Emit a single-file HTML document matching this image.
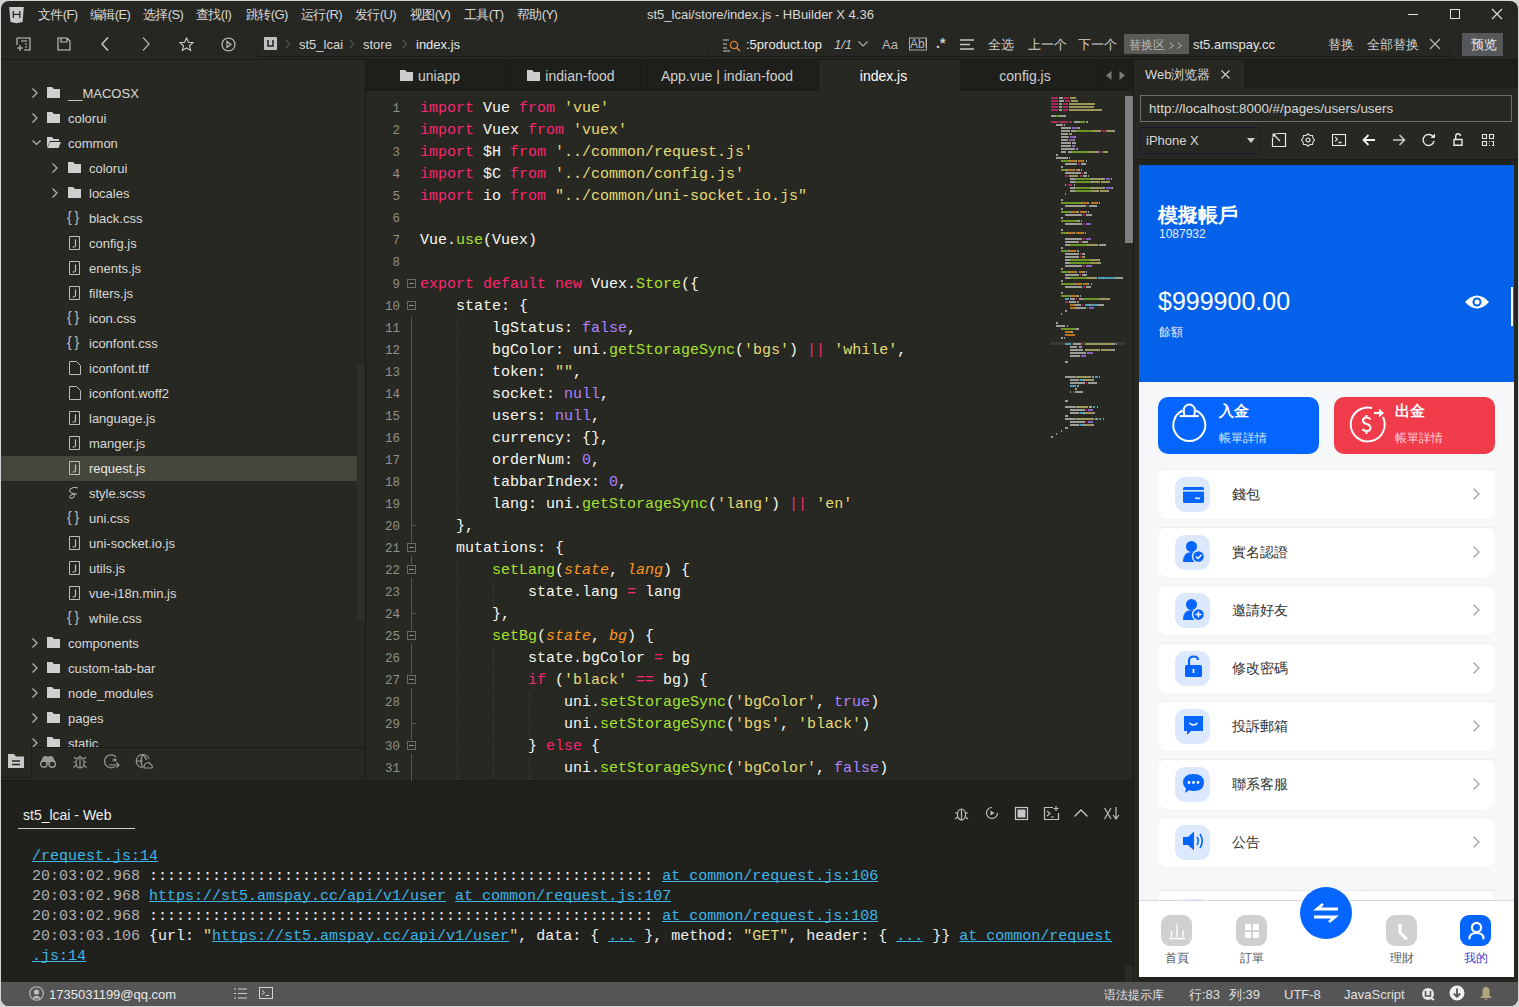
<!DOCTYPE html><html><head><meta charset="utf-8"><style>*{box-sizing:border-box;margin:0;padding:0}
html,body{width:1519px;height:1007px;overflow:hidden;background:#d4d4d4}
body{position:relative;font-family:"Liberation Sans",sans-serif;font-size:13px;color:#d6d6d6}
.ab{position:absolute}
.win{position:absolute;left:1px;top:1px;width:1517px;height:1005px;background:#262722;border-radius:8px 8px 8px 8px;overflow:hidden}
.t{position:absolute;white-space:pre;line-height:1}
.code{position:absolute;left:420px;white-space:pre;font-family:"Liberation Mono",monospace;font-size:15px;line-height:22px;color:#f8f8f2}
.ln{position:absolute;width:40px;left:360px;text-align:right;font-family:"Liberation Mono",monospace;font-size:12.5px;line-height:22px;color:#90908a}
.k{color:#f92672}.f{color:#a6e22e}.s{color:#e6db74}.n{color:#ae81ff}.p{color:#fd971f;font-style:italic}
svg{position:absolute;overflow:visible}
</style></head><body><div class="win"></div><svg style="left:0px;top:0px;" width="30" height="30" viewBox="0 0 30 30"><path d="M9.2 7 H23.8 L22.6 22 L16.5 23.2 L10.5 22 Z" fill="#cbcbcb"/><path d="M13.3 11 V18 M19.8 11 V18 M13.3 14.4 H19.8" stroke="#262722" stroke-width="1.3" fill="none"/></svg><div class="t" style="left:38px;top:8px;font-size:13px;color:#d8d8d8;letter-spacing:-0.6px">文件(F)</div><div class="t" style="left:90px;top:8px;font-size:13px;color:#d8d8d8;letter-spacing:-0.6px">编辑(E)</div><div class="t" style="left:143px;top:8px;font-size:13px;color:#d8d8d8;letter-spacing:-0.6px">选择(S)</div><div class="t" style="left:196px;top:8px;font-size:13px;color:#d8d8d8;letter-spacing:-0.6px">查找(I)</div><div class="t" style="left:246px;top:8px;font-size:13px;color:#d8d8d8;letter-spacing:-0.6px">跳转(G)</div><div class="t" style="left:301px;top:8px;font-size:13px;color:#d8d8d8;letter-spacing:-0.6px">运行(R)</div><div class="t" style="left:355px;top:8px;font-size:13px;color:#d8d8d8;letter-spacing:-0.6px">发行(U)</div><div class="t" style="left:410px;top:8px;font-size:13px;color:#d8d8d8;letter-spacing:-0.6px">视图(V)</div><div class="t" style="left:464px;top:8px;font-size:13px;color:#d8d8d8;letter-spacing:-0.6px">工具(T)</div><div class="t" style="left:517px;top:8px;font-size:13px;color:#d8d8d8;letter-spacing:-0.6px">帮助(Y)</div><div class="t title" style="left:647px;top:8px;font-size:13px;color:#d8d8d8;">st5_lcai/store/index.js - HBuilder X 4.36</div><svg style="left:1408px;top:14px;" width="10" height="1" viewBox="0 0 10 1"><rect x="0" y="0" width="10" height="1" fill="#e0e0e0"/></svg><svg style="left:1450px;top:9px;" width="10" height="10" viewBox="0 0 10 10"><rect x="0.5" y="0.5" width="9" height="9" fill="none" stroke="#e0e0e0" stroke-width="1"/></svg><svg style="left:1492px;top:9px;" width="10" height="10" viewBox="0 0 10 10"><path d="M0 0 L10 10 M10 0 L0 10" stroke="#e0e0e0" stroke-width="1.1"/></svg><svg style="left:16px;top:37px;" width="15" height="14" viewBox="0 0 15 14"><path d="M1 1 H14 V13 H8 M1 1 V8" fill="none" stroke="#c8c8c8" stroke-width="1.1"/><path d="M5 4 H11 M9 7 H11 M9 10 H11 M1 11 H7 M4 8 V14" fill="none" stroke="#c8c8c8" stroke-width="1.1"/></svg><svg style="left:57px;top:37px;" width="14" height="14" viewBox="0 0 14 14"><path d="M1 1 H10 L13 4 V13 H1 Z M4 1 V5 H10 V1" fill="none" stroke="#c8c8c8" stroke-width="1.1"/></svg><svg style="left:101px;top:37px;" width="8" height="14" viewBox="0 0 8 14"><path d="M7 0.5 L1 7 L7 13.5" fill="none" stroke="#cfcfcf" stroke-width="1.4"/></svg><svg style="left:142px;top:37px;" width="8" height="14" viewBox="0 0 8 14"><path d="M1 0.5 L7 7 L1 13.5" fill="none" stroke="#a8a8a8" stroke-width="1.4"/></svg><svg style="left:179px;top:37px;" width="15" height="15" viewBox="0 0 15 15"><path d="M7.5 1 L9.4 5.3 L14 5.7 L10.5 8.8 L11.6 13.4 L7.5 11 L3.4 13.4 L4.5 8.8 L1 5.7 L5.6 5.3 Z" fill="none" stroke="#c8c8c8" stroke-width="1.1"/></svg><svg style="left:221px;top:37px;" width="15" height="15" viewBox="0 0 15 15"><circle cx="7.5" cy="7.5" r="6.5" fill="none" stroke="#c8c8c8" stroke-width="1.1"/><path d="M6 4.5 L10 7.5 L6 10.5 Z" fill="none" stroke="#c8c8c8" stroke-width="1.1"/></svg><div class="ab" style="left:257px;top:56px;width:450px;height:1px;background:#1a1b18;"></div><div class="ab" style="left:257px;top:49px;width:1px;height:8px;background:#1a1b18;"></div><div class="ab" style="left:264px;top:37px;width:13px;height:13px;background:#c0c0c0;border-radius:1px"></div><svg style="left:266px;top:39px;" width="9" height="9" viewBox="0 0 9 9"><path d="M2 1 V7 H7 V1" fill="none" stroke="#262722" stroke-width="1.6"/></svg><svg style="left:285px;top:39px;" width="5" height="10" viewBox="0 0 5 10"><path d="M0.5 0.5 L4.5 5 L0.5 9.5" fill="none" stroke="#6a6a66" stroke-width="1"/></svg><svg style="left:349px;top:39px;" width="5" height="10" viewBox="0 0 5 10"><path d="M0.5 0.5 L4.5 5 L0.5 9.5" fill="none" stroke="#6a6a66" stroke-width="1"/></svg><svg style="left:402px;top:39px;" width="5" height="10" viewBox="0 0 5 10"><path d="M0.5 0.5 L4.5 5 L0.5 9.5" fill="none" stroke="#6a6a66" stroke-width="1"/></svg><div class="t" style="left:299px;top:38px;font-size:13px;color:#d8d8d8;">st5_lcai</div><div class="t" style="left:363px;top:38px;font-size:13px;color:#d8d8d8;">store</div><div class="t" style="left:416px;top:38px;font-size:13px;color:#e8e8e8;">index.js</div><div class="ab" style="left:708px;top:49px;width:1px;height:8px;background:#1a1b18;"></div><div class="ab" style="left:708px;top:56px;width:741px;height:1px;background:#1a1b18;"></div><div class="ab" style="left:1449px;top:49px;width:1px;height:8px;background:#1a1b18;"></div><svg style="left:723px;top:38px;" width="18" height="14" viewBox="0 0 18 14"><path d="M0 2 H6 M0 6 H4 M0 10 H4 M0 13 H7" stroke="#c8c8c8" stroke-width="1.1"/><circle cx="11" cy="7" r="3.6" fill="none" stroke="#e0803a" stroke-width="1.3"/><path d="M13.5 9.5 L17 13" stroke="#e0803a" stroke-width="1.5"/></svg><div class="t" style="left:746px;top:38px;font-size:13px;color:#e8e8e8;">:5product.top</div><div class="t" style="left:834px;top:38px;font-size:13px;color:#c8c8c8;font-style:italic">1/1</div><svg style="left:858px;top:41px;" width="10" height="6" viewBox="0 0 10 6"><path d="M0.5 0.5 L5 5 L9.5 0.5" fill="none" stroke="#b0b0b0" stroke-width="1.1"/></svg><div class="t" style="left:882px;top:38px;font-size:13px;color:#b8b8b8;">Aa</div><svg style="left:909px;top:37px;" width="18" height="14" viewBox="0 0 18 14"><rect x="0.5" y="1" width="17" height="12" fill="none" stroke="#a8a8a8" stroke-width="1"/></svg><div class="t" style="left:910px;top:38px;font-size:12px;color:#b8b8b8;">Abl</div><div class="t" style="left:936px;top:36px;font-size:14px;color:#d0d0d0;font-weight:bold">.*</div><svg style="left:960px;top:39px;" width="14" height="11" viewBox="0 0 14 11"><path d="M0 1 H14 M0 5.5 H10 M0 10 H14" stroke="#c8c8c8" stroke-width="1.4"/></svg><div class="t" style="left:988px;top:38px;font-size:13px;color:#d0d0d0;">全选</div><div class="t" style="left:1028px;top:38px;font-size:13px;color:#d0d0d0;">上一个</div><div class="t" style="left:1078px;top:38px;font-size:13px;color:#d0d0d0;">下一个</div><div class="ab" style="left:1124px;top:34px;width:65px;height:20px;background:#5a5b57;"></div><div class="t" style="left:1129px;top:39px;font-size:12px;color:#b8b8b8;">替换区</div><svg style="left:1169px;top:42px;" width="5" height="7" viewBox="0 0 5 7"><path d="M0.5 0.5 L4.5 3.5 L0.5 6.5" fill="none" stroke="#b8b8b8" stroke-width="1"/></svg><svg style="left:1177px;top:42px;" width="5" height="7" viewBox="0 0 5 7"><path d="M0.5 0.5 L4.5 3.5 L0.5 6.5" fill="none" stroke="#b8b8b8" stroke-width="1"/></svg><div class="t" style="left:1193px;top:38px;font-size:13px;color:#e0e0e0;">st5.amspay.cc</div><div class="t" style="left:1328px;top:38px;font-size:13px;color:#d0d0d0;">替换</div><div class="t" style="left:1367px;top:38px;font-size:13px;color:#d0d0d0;">全部替换</div><svg style="left:1429px;top:38px;" width="12" height="12" viewBox="0 0 12 12"><path d="M1 1 L11 11 M11 1 L1 11" stroke="#b8b8b8" stroke-width="1.2"/></svg><div class="ab" style="left:1462px;top:33px;width:41px;height:23px;background:#56575a;"></div><div class="t" style="left:1471px;top:38px;font-size:13px;color:#e8e8e8;">预览</div><div class="ab" style="left:1px;top:59px;width:1517px;height:1px;background:#1a1b18;"></div><div class="ab" style="left:1px;top:60px;width:364px;height:688px;background:#272822;"></div><div class="ab" style="left:365px;top:60px;width:1px;height:721px;background:#1a1b17;"></div><div class="ab" style="left:357px;top:365px;width:8px;height:255px;background:#2e2f2a;"></div><svg style="left:32px;top:88px;" width="6" height="10" viewBox="0 0 6 10"><path d="M0.5 0.5 L5 5 L0.5 9.5" fill="none" stroke="#b8b8b8" stroke-width="1.2"/></svg><svg style="left:47px;top:87px;" width="13" height="12" viewBox="0 0 13 12"><path d="M0 0 H5 L7 2 H13 V11 H0 Z" fill="#cfcfcf"/></svg><div class="t" style="left:68px;top:87px;font-size:13px;color:#d8d8d8;">__MACOSX</div><svg style="left:32px;top:113px;" width="6" height="10" viewBox="0 0 6 10"><path d="M0.5 0.5 L5 5 L0.5 9.5" fill="none" stroke="#b8b8b8" stroke-width="1.2"/></svg><svg style="left:47px;top:112px;" width="13" height="12" viewBox="0 0 13 12"><path d="M0 0 H5 L7 2 H13 V11 H0 Z" fill="#cfcfcf"/></svg><div class="t" style="left:68px;top:112px;font-size:13px;color:#d8d8d8;">colorui</div><svg style="left:32px;top:140px;" width="9" height="6" viewBox="0 0 9 6"><path d="M0.5 0.5 L4.5 4.5 L8.5 0.5" fill="none" stroke="#b8b8b8" stroke-width="1.2"/></svg><svg style="left:47px;top:137px;" width="14" height="12" viewBox="0 0 14 12"><path d="M0 0 H5 L6.5 2 H12 V4 H3 L0 11 Z" fill="#cfcfcf"/><path d="M3 5 H14 L11.5 11 H0.5 Z" fill="#cfcfcf"/></svg><div class="t" style="left:68px;top:137px;font-size:13px;color:#d8d8d8;">common</div><svg style="left:52px;top:163px;" width="6" height="10" viewBox="0 0 6 10"><path d="M0.5 0.5 L5 5 L0.5 9.5" fill="none" stroke="#b8b8b8" stroke-width="1.2"/></svg><svg style="left:68px;top:162px;" width="13" height="12" viewBox="0 0 13 12"><path d="M0 0 H5 L7 2 H13 V11 H0 Z" fill="#cfcfcf"/></svg><div class="t" style="left:89px;top:162px;font-size:13px;color:#d8d8d8;">colorui</div><svg style="left:52px;top:188px;" width="6" height="10" viewBox="0 0 6 10"><path d="M0.5 0.5 L5 5 L0.5 9.5" fill="none" stroke="#b8b8b8" stroke-width="1.2"/></svg><svg style="left:68px;top:187px;" width="13" height="12" viewBox="0 0 13 12"><path d="M0 0 H5 L7 2 H13 V11 H0 Z" fill="#cfcfcf"/></svg><div class="t" style="left:89px;top:187px;font-size:13px;color:#d8d8d8;">locales</div><div class="t" style="left:67px;top:210px;font-size:14px;color:#bdbdbd;">{&thinsp;}</div><div class="t" style="left:89px;top:212px;font-size:13px;color:#d8d8d8;">black.css</div><svg style="left:69px;top:236px;" width="11" height="14" viewBox="0 0 11 14"><path d="M0.5 0.5 H10.5 V13.5 H0.5 Z" fill="none" stroke="#bdbdbd" stroke-width="1"/><path d="M6.5 3.5 V9.5 Q6.5 11 5 11 H3.5" fill="none" stroke="#bdbdbd" stroke-width="1.2"/></svg><div class="t" style="left:89px;top:237px;font-size:13px;color:#d8d8d8;">config.js</div><svg style="left:69px;top:261px;" width="11" height="14" viewBox="0 0 11 14"><path d="M0.5 0.5 H10.5 V13.5 H0.5 Z" fill="none" stroke="#bdbdbd" stroke-width="1"/><path d="M6.5 3.5 V9.5 Q6.5 11 5 11 H3.5" fill="none" stroke="#bdbdbd" stroke-width="1.2"/></svg><div class="t" style="left:89px;top:262px;font-size:13px;color:#d8d8d8;">enents.js</div><svg style="left:69px;top:286px;" width="11" height="14" viewBox="0 0 11 14"><path d="M0.5 0.5 H10.5 V13.5 H0.5 Z" fill="none" stroke="#bdbdbd" stroke-width="1"/><path d="M6.5 3.5 V9.5 Q6.5 11 5 11 H3.5" fill="none" stroke="#bdbdbd" stroke-width="1.2"/></svg><div class="t" style="left:89px;top:287px;font-size:13px;color:#d8d8d8;">filters.js</div><div class="t" style="left:67px;top:310px;font-size:14px;color:#bdbdbd;">{&thinsp;}</div><div class="t" style="left:89px;top:312px;font-size:13px;color:#d8d8d8;">icon.css</div><div class="t" style="left:67px;top:335px;font-size:14px;color:#bdbdbd;">{&thinsp;}</div><div class="t" style="left:89px;top:337px;font-size:13px;color:#d8d8d8;">iconfont.css</div><svg style="left:69px;top:361px;" width="12" height="14" viewBox="0 0 12 14"><path d="M0.5 0.5 H7.5 L11.5 4.5 V13.5 H0.5 Z" fill="none" stroke="#bdbdbd" stroke-width="1"/></svg><div class="t" style="left:89px;top:362px;font-size:13px;color:#d8d8d8;">iconfont.ttf</div><svg style="left:69px;top:386px;" width="12" height="14" viewBox="0 0 12 14"><path d="M0.5 0.5 H7.5 L11.5 4.5 V13.5 H0.5 Z" fill="none" stroke="#bdbdbd" stroke-width="1"/></svg><div class="t" style="left:89px;top:387px;font-size:13px;color:#d8d8d8;">iconfont.woff2</div><svg style="left:69px;top:411px;" width="11" height="14" viewBox="0 0 11 14"><path d="M0.5 0.5 H10.5 V13.5 H0.5 Z" fill="none" stroke="#bdbdbd" stroke-width="1"/><path d="M6.5 3.5 V9.5 Q6.5 11 5 11 H3.5" fill="none" stroke="#bdbdbd" stroke-width="1.2"/></svg><div class="t" style="left:89px;top:412px;font-size:13px;color:#d8d8d8;">language.js</div><svg style="left:69px;top:436px;" width="11" height="14" viewBox="0 0 11 14"><path d="M0.5 0.5 H10.5 V13.5 H0.5 Z" fill="none" stroke="#bdbdbd" stroke-width="1"/><path d="M6.5 3.5 V9.5 Q6.5 11 5 11 H3.5" fill="none" stroke="#bdbdbd" stroke-width="1.2"/></svg><div class="t" style="left:89px;top:437px;font-size:13px;color:#d8d8d8;">manger.js</div><div class="ab" style="left:1px;top:456px;width:356px;height:25px;background:#44453b;"></div><svg style="left:69px;top:461px;" width="11" height="14" viewBox="0 0 11 14"><path d="M0.5 0.5 H10.5 V13.5 H0.5 Z" fill="none" stroke="#bdbdbd" stroke-width="1"/><path d="M6.5 3.5 V9.5 Q6.5 11 5 11 H3.5" fill="none" stroke="#bdbdbd" stroke-width="1.2"/></svg><div class="t" style="left:89px;top:462px;font-size:13px;color:#e8e8e8;">request.js</div><svg style="left:68px;top:486px;" width="13" height="14" viewBox="0 0 13 14"><path d="M10 2 Q6 0 2 3 Q0 6 4 7 Q8 8 6 11 Q4 13 2 12 Q1 11 3 9 Q6 7 9 8" fill="none" stroke="#bdbdbd" stroke-width="1"/></svg><div class="t" style="left:89px;top:487px;font-size:13px;color:#d8d8d8;">style.scss</div><div class="t" style="left:67px;top:510px;font-size:14px;color:#bdbdbd;">{&thinsp;}</div><div class="t" style="left:89px;top:512px;font-size:13px;color:#d8d8d8;">uni.css</div><svg style="left:69px;top:536px;" width="11" height="14" viewBox="0 0 11 14"><path d="M0.5 0.5 H10.5 V13.5 H0.5 Z" fill="none" stroke="#bdbdbd" stroke-width="1"/><path d="M6.5 3.5 V9.5 Q6.5 11 5 11 H3.5" fill="none" stroke="#bdbdbd" stroke-width="1.2"/></svg><div class="t" style="left:89px;top:537px;font-size:13px;color:#d8d8d8;">uni-socket.io.js</div><svg style="left:69px;top:561px;" width="11" height="14" viewBox="0 0 11 14"><path d="M0.5 0.5 H10.5 V13.5 H0.5 Z" fill="none" stroke="#bdbdbd" stroke-width="1"/><path d="M6.5 3.5 V9.5 Q6.5 11 5 11 H3.5" fill="none" stroke="#bdbdbd" stroke-width="1.2"/></svg><div class="t" style="left:89px;top:562px;font-size:13px;color:#d8d8d8;">utils.js</div><svg style="left:69px;top:586px;" width="11" height="14" viewBox="0 0 11 14"><path d="M0.5 0.5 H10.5 V13.5 H0.5 Z" fill="none" stroke="#bdbdbd" stroke-width="1"/><path d="M6.5 3.5 V9.5 Q6.5 11 5 11 H3.5" fill="none" stroke="#bdbdbd" stroke-width="1.2"/></svg><div class="t" style="left:89px;top:587px;font-size:13px;color:#d8d8d8;">vue-i18n.min.js</div><div class="t" style="left:67px;top:610px;font-size:14px;color:#bdbdbd;">{&thinsp;}</div><div class="t" style="left:89px;top:612px;font-size:13px;color:#d8d8d8;">while.css</div><svg style="left:32px;top:638px;" width="6" height="10" viewBox="0 0 6 10"><path d="M0.5 0.5 L5 5 L0.5 9.5" fill="none" stroke="#b8b8b8" stroke-width="1.2"/></svg><svg style="left:47px;top:637px;" width="13" height="12" viewBox="0 0 13 12"><path d="M0 0 H5 L7 2 H13 V11 H0 Z" fill="#cfcfcf"/></svg><div class="t" style="left:68px;top:637px;font-size:13px;color:#d8d8d8;">components</div><svg style="left:32px;top:663px;" width="6" height="10" viewBox="0 0 6 10"><path d="M0.5 0.5 L5 5 L0.5 9.5" fill="none" stroke="#b8b8b8" stroke-width="1.2"/></svg><svg style="left:47px;top:662px;" width="13" height="12" viewBox="0 0 13 12"><path d="M0 0 H5 L7 2 H13 V11 H0 Z" fill="#cfcfcf"/></svg><div class="t" style="left:68px;top:662px;font-size:13px;color:#d8d8d8;">custom-tab-bar</div><svg style="left:32px;top:688px;" width="6" height="10" viewBox="0 0 6 10"><path d="M0.5 0.5 L5 5 L0.5 9.5" fill="none" stroke="#b8b8b8" stroke-width="1.2"/></svg><svg style="left:47px;top:687px;" width="13" height="12" viewBox="0 0 13 12"><path d="M0 0 H5 L7 2 H13 V11 H0 Z" fill="#cfcfcf"/></svg><div class="t" style="left:68px;top:687px;font-size:13px;color:#d8d8d8;">node_modules</div><svg style="left:32px;top:713px;" width="6" height="10" viewBox="0 0 6 10"><path d="M0.5 0.5 L5 5 L0.5 9.5" fill="none" stroke="#b8b8b8" stroke-width="1.2"/></svg><svg style="left:47px;top:712px;" width="13" height="12" viewBox="0 0 13 12"><path d="M0 0 H5 L7 2 H13 V11 H0 Z" fill="#cfcfcf"/></svg><div class="t" style="left:68px;top:712px;font-size:13px;color:#d8d8d8;">pages</div><svg style="left:32px;top:738px;" width="6" height="10" viewBox="0 0 6 10"><path d="M0.5 0.5 L5 5 L0.5 9.5" fill="none" stroke="#b8b8b8" stroke-width="1.2"/></svg><svg style="left:47px;top:737px;" width="13" height="12" viewBox="0 0 13 12"><path d="M0 0 H5 L7 2 H13 V11 H0 Z" fill="#cfcfcf"/></svg><div class="t" style="left:68px;top:737px;font-size:13px;color:#d8d8d8;">static</div><div class="ab" style="left:1px;top:748px;width:364px;height:33px;background:#272822;"></div><div class="ab" style="left:31px;top:747px;width:334px;height:1px;background:#1b1c18;"></div><div class="ab" style="left:1px;top:746px;width:31px;height:32px;background:#272822;border-right:1px solid #1b1c18;border-bottom:1px solid #1b1c18;border-radius:0 0 5px 0"></div><svg style="left:8px;top:754px;" width="16" height="14" viewBox="0 0 16 14"><path d="M0 0 H6 L8 2.5 H16 V14 H0 Z" fill="#c8c8c8"/><path d="M4 7 H12 M4 10.5 H12" stroke="#272822" stroke-width="1.6"/></svg><svg style="left:40px;top:755px;" width="16" height="13" viewBox="0 0 16 13"><circle cx="3.8" cy="9" r="3.2" fill="none" stroke="#9a9a96" stroke-width="1.4"/><circle cx="12.2" cy="9" r="3.2" fill="none" stroke="#9a9a96" stroke-width="1.4"/><path d="M1 7 L3 2 Q4 0.5 6.5 1 L8 2 L9.5 1 Q12 0.5 13 2 L15 7 Z" fill="#9a9a96"/><path d="M6.5 8.5 H9.5" stroke="#9a9a96" stroke-width="1.4"/></svg><svg style="left:73px;top:754px;" width="14" height="15" viewBox="0 0 14 15"><ellipse cx="7" cy="9" rx="4" ry="5" fill="none" stroke="#9a9a96" stroke-width="1.2"/><path d="M4.5 4.5 Q7 0.5 9.5 4.5" fill="none" stroke="#9a9a96" stroke-width="1.2"/><path d="M7 5 V14 M3 8 H0.5 M11 8 H13.5 M3 11.5 L0.5 13.5 M11 11.5 L13.5 13.5 M3.5 5 L1 3 M10.5 5 L13 3" fill="none" stroke="#9a9a96" stroke-width="1.2"/></svg><svg style="left:104px;top:754px;" width="16" height="15" viewBox="0 0 16 15"><path d="M12 3 A6.5 6.5 0 1 0 11 12.5" fill="none" stroke="#9a9a96" stroke-width="1.2"/><path d="M5 11 H15 M12.5 8.5 L15 11 L12.5 13.5 M8 6 H12 M10.5 4.5 L12 6 L10.5 7.5" fill="none" stroke="#9a9a96" stroke-width="1.2"/></svg><svg style="left:136px;top:754px;" width="17" height="15" viewBox="0 0 17 15"><path d="M13 5 A6.5 6.5 0 1 0 6 13.5" fill="none" stroke="#9a9a96" stroke-width="1.2"/><path d="M0.5 7 H7 M7 0.5 Q3 7 7 13.5 M6.5 0.5 Q10 3 10.5 6" fill="none" stroke="#9a9a96" stroke-width="1.2"/><path d="M8 14 H16 Q17 11 14.5 10.5 Q13.5 7.5 11 9 Q8 9 8 14 Z" fill="none" stroke="#9a9a96" stroke-width="1.2"/></svg><div class="ab" style="left:1px;top:780px;width:1132px;height:1px;background:#1a1b17;"></div><div class="ab" style="left:366px;top:60px;width:767px;height:30px;background:#1e1f1b;"></div><div class="ab" style="left:506px;top:60px;width:1px;height:30px;background:#191a16;"></div><div class="ab" style="left:366px;top:61px;width:140px;height:30px;display:flex;align-items:center;justify-content:center;padding-right:12px;font-size:14px;color:#cfcfcf;white-space:pre"><svg style="position:relative;display:inline-block;vertical-align:-1px;margin-right:5px" width="13" height="12" viewBox="0 0 13 12"><path d="M0 0 H5 L7 2 H13 V11 H0 Z" fill="#cdcdcd"/></svg>uniapp</div><div class="ab" style="left:647px;top:60px;width:1px;height:30px;background:#191a16;"></div><div class="ab" style="left:507px;top:61px;width:140px;height:30px;display:flex;align-items:center;justify-content:center;padding-right:12px;font-size:14px;color:#cfcfcf;white-space:pre"><svg style="position:relative;display:inline-block;vertical-align:-1px;margin-right:5px" width="13" height="12" viewBox="0 0 13 12"><path d="M0 0 H5 L7 2 H13 V11 H0 Z" fill="#cdcdcd"/></svg>indian-food</div><div class="ab" style="left:818px;top:60px;width:1px;height:30px;background:#191a16;"></div><div class="ab" style="left:648px;top:61px;width:170px;height:30px;display:flex;align-items:center;justify-content:center;padding-right:12px;font-size:14px;color:#cfcfcf;white-space:pre">App.vue | indian-food</div><div class="ab" style="left:819px;top:60px;width:141px;height:31px;background:#272822;"></div><div class="ab" style="left:819px;top:61px;width:141px;height:30px;display:flex;align-items:center;justify-content:center;padding-right:12px;font-size:14px;color:#ffffff;white-space:pre">index.js</div><div class="ab" style="left:1101px;top:60px;width:1px;height:30px;background:#191a16;"></div><div class="ab" style="left:961px;top:61px;width:140px;height:30px;display:flex;align-items:center;justify-content:center;padding-right:12px;font-size:14px;color:#cfcfcf;white-space:pre">config.js</div><svg style="left:1106px;top:71px;" width="6" height="9" viewBox="0 0 6 9"><path d="M5.5 0 V9 L0 4.5 Z" fill="#7a7a76"/></svg><svg style="left:1119px;top:71px;" width="6" height="9" viewBox="0 0 6 9"><path d="M0.5 0 V9 L6 4.5 Z" fill="#7a7a76"/></svg><div class="ab" style="left:366px;top:90px;width:767px;height:1px;background:#1b1c18;"></div><div class="ab" style="left:819px;top:90px;width:141px;height:1px;background:#272822;"></div><div class="ab" style="left:366px;top:91px;width:767px;height:689px;background:#272822;"></div><div class="ab" style="left:457px;top:318px;width:1px;height:198px;background:repeating-linear-gradient(#4a4b45 0 1px,transparent 1px 3px)"></div><div class="ab" style="left:457px;top:560px;width:1px;height:220px;background:repeating-linear-gradient(#4a4b45 0 1px,transparent 1px 3px)"></div><div class="ab" style="left:493px;top:582px;width:1px;height:22px;background:repeating-linear-gradient(#4a4b45 0 1px,transparent 1px 3px)"></div><div class="ab" style="left:493px;top:648px;width:1px;height:132px;background:repeating-linear-gradient(#4a4b45 0 1px,transparent 1px 3px)"></div><div class="ab" style="left:529px;top:692px;width:1px;height:44px;background:repeating-linear-gradient(#4a4b45 0 1px,transparent 1px 3px)"></div><div class="ab" style="left:529px;top:758px;width:1px;height:22px;background:repeating-linear-gradient(#4a4b45 0 1px,transparent 1px 3px)"></div><div class="ab" style="left:411px;top:317px;width:1px;height:464px;background:#55564f;"></div><div class="ab" style="left:412px;top:525px;width:4px;height:1px;background:#55564f;"></div><div class="ab" style="left:412px;top:613px;width:4px;height:1px;background:#55564f;"></div><div class="ab" style="left:412px;top:723px;width:4px;height:1px;background:#55564f;"></div><svg style="left:407px;top:279px;" width="9" height="9" viewBox="0 0 9 9"><rect x="0.5" y="0.5" width="8" height="8" fill="#272822" stroke="#6a6b64" stroke-width="1"/><path d="M2 4.5 H7" stroke="#8a8b84" stroke-width="1"/></svg><svg style="left:407px;top:301px;" width="9" height="9" viewBox="0 0 9 9"><rect x="0.5" y="0.5" width="8" height="8" fill="#272822" stroke="#6a6b64" stroke-width="1"/><path d="M2 4.5 H7" stroke="#8a8b84" stroke-width="1"/></svg><div class="ab" style="left:411px;top:542px;width:1px;height:14px;background:#272822;"></div><svg style="left:407px;top:543px;" width="9" height="9" viewBox="0 0 9 9"><rect x="0.5" y="0.5" width="8" height="8" fill="#272822" stroke="#6a6b64" stroke-width="1"/><path d="M2 4.5 H7" stroke="#8a8b84" stroke-width="1"/></svg><div class="ab" style="left:411px;top:564px;width:1px;height:14px;background:#272822;"></div><svg style="left:407px;top:565px;" width="9" height="9" viewBox="0 0 9 9"><rect x="0.5" y="0.5" width="8" height="8" fill="#272822" stroke="#6a6b64" stroke-width="1"/><path d="M2 4.5 H7" stroke="#8a8b84" stroke-width="1"/></svg><div class="ab" style="left:411px;top:630px;width:1px;height:14px;background:#272822;"></div><svg style="left:407px;top:631px;" width="9" height="9" viewBox="0 0 9 9"><rect x="0.5" y="0.5" width="8" height="8" fill="#272822" stroke="#6a6b64" stroke-width="1"/><path d="M2 4.5 H7" stroke="#8a8b84" stroke-width="1"/></svg><div class="ab" style="left:411px;top:674px;width:1px;height:14px;background:#272822;"></div><svg style="left:407px;top:675px;" width="9" height="9" viewBox="0 0 9 9"><rect x="0.5" y="0.5" width="8" height="8" fill="#272822" stroke="#6a6b64" stroke-width="1"/><path d="M2 4.5 H7" stroke="#8a8b84" stroke-width="1"/></svg><div class="ab" style="left:411px;top:740px;width:1px;height:14px;background:#272822;"></div><svg style="left:407px;top:741px;" width="9" height="9" viewBox="0 0 9 9"><rect x="0.5" y="0.5" width="8" height="8" fill="#272822" stroke="#6a6b64" stroke-width="1"/><path d="M2 4.5 H7" stroke="#8a8b84" stroke-width="1"/></svg><div class="ln" style="top:98px">1</div><div class="code" style="top:98px"><span class="k">import</span> Vue <span class="k">from</span> <span class="s">'vue'</span></div><div class="ln" style="top:120px">2</div><div class="code" style="top:120px"><span class="k">import</span> Vuex <span class="k">from</span> <span class="s">'vuex'</span></div><div class="ln" style="top:142px">3</div><div class="code" style="top:142px"><span class="k">import</span> $H <span class="k">from</span> <span class="s">'../common/request.js'</span></div><div class="ln" style="top:164px">4</div><div class="code" style="top:164px"><span class="k">import</span> $C <span class="k">from</span> <span class="s">'../common/config.js'</span></div><div class="ln" style="top:186px">5</div><div class="code" style="top:186px"><span class="k">import</span> io <span class="k">from</span> <span class="s">"../common/uni-socket.io.js"</span></div><div class="ln" style="top:208px">6</div><div class="code" style="top:208px"></div><div class="ln" style="top:230px">7</div><div class="code" style="top:230px">Vue.<span class="f">use</span>(Vuex)</div><div class="ln" style="top:252px">8</div><div class="code" style="top:252px"></div><div class="ln" style="top:274px">9</div><div class="code" style="top:274px"><span class="k">export</span> <span class="k">default</span> <span class="k">new</span> Vuex.<span class="f">Store</span>({</div><div class="ln" style="top:296px">10</div><div class="code" style="top:296px">    state: {</div><div class="ln" style="top:318px">11</div><div class="code" style="top:318px">        lgStatus: <span class="n">false</span>,</div><div class="ln" style="top:340px">12</div><div class="code" style="top:340px">        bgColor: uni.<span class="f">getStorageSync</span>(<span class="s">'bgs'</span>) <span class="k">||</span> <span class="s">'while'</span>,</div><div class="ln" style="top:362px">13</div><div class="code" style="top:362px">        token: <span class="s">""</span>,</div><div class="ln" style="top:384px">14</div><div class="code" style="top:384px">        socket: <span class="n">null</span>,</div><div class="ln" style="top:406px">15</div><div class="code" style="top:406px">        users: <span class="n">null</span>,</div><div class="ln" style="top:428px">16</div><div class="code" style="top:428px">        currency: {},</div><div class="ln" style="top:450px">17</div><div class="code" style="top:450px">        orderNum: <span class="n">0</span>,</div><div class="ln" style="top:472px">18</div><div class="code" style="top:472px">        tabbarIndex: <span class="n">0</span>,</div><div class="ln" style="top:494px">19</div><div class="code" style="top:494px">        lang: uni.<span class="f">getStorageSync</span>(<span class="s">'lang'</span>) <span class="k">||</span> <span class="s">'en'</span></div><div class="ln" style="top:516px">20</div><div class="code" style="top:516px">    },</div><div class="ln" style="top:538px">21</div><div class="code" style="top:538px">    mutations: {</div><div class="ln" style="top:560px">22</div><div class="code" style="top:560px">        <span class="f">setLang</span>(<span class="p">state</span>, <span class="p">lang</span>) {</div><div class="ln" style="top:582px">23</div><div class="code" style="top:582px">            state.lang <span class="k">=</span> lang</div><div class="ln" style="top:604px">24</div><div class="code" style="top:604px">        },</div><div class="ln" style="top:626px">25</div><div class="code" style="top:626px">        <span class="f">setBg</span>(<span class="p">state</span>, <span class="p">bg</span>) {</div><div class="ln" style="top:648px">26</div><div class="code" style="top:648px">            state.bgColor <span class="k">=</span> bg</div><div class="ln" style="top:670px">27</div><div class="code" style="top:670px">            <span class="k">if</span> (<span class="s">'black'</span> <span class="k">==</span> bg) {</div><div class="ln" style="top:692px">28</div><div class="code" style="top:692px">                uni.<span class="f">setStorageSync</span>(<span class="s">'bgColor'</span>, <span class="n">true</span>)</div><div class="ln" style="top:714px">29</div><div class="code" style="top:714px">                uni.<span class="f">setStorageSync</span>(<span class="s">'bgs'</span>, <span class="s">'black'</span>)</div><div class="ln" style="top:736px">30</div><div class="code" style="top:736px">            } <span class="k">else</span> {</div><div class="ln" style="top:758px">31</div><div class="code" style="top:758px">                uni.<span class="f">setStorageSync</span>(<span class="s">'bgColor'</span>, <span class="n">false</span>)</div><div class="ab" style="left:1051.00px;top:97.0px;width:7.14px;height:2px;background:#a82a5c"></div><div class="ab" style="left:1059.33px;top:97.0px;width:3.57px;height:2px;background:#9c9c98"></div><div class="ab" style="left:1064.09px;top:97.0px;width:4.76px;height:2px;background:#a82a5c"></div><div class="ab" style="left:1070.04px;top:97.0px;width:5.95px;height:2px;background:#9c9658"></div><div class="ab" style="left:1051.00px;top:100.0px;width:7.14px;height:2px;background:#a82a5c"></div><div class="ab" style="left:1059.33px;top:100.0px;width:4.76px;height:2px;background:#9c9c98"></div><div class="ab" style="left:1065.28px;top:100.0px;width:4.76px;height:2px;background:#a82a5c"></div><div class="ab" style="left:1071.23px;top:100.0px;width:7.14px;height:2px;background:#9c9658"></div><div class="ab" style="left:1051.00px;top:103.0px;width:7.14px;height:2px;background:#a82a5c"></div><div class="ab" style="left:1059.33px;top:103.0px;width:2.38px;height:2px;background:#9c9c98"></div><div class="ab" style="left:1062.90px;top:103.0px;width:4.76px;height:2px;background:#a82a5c"></div><div class="ab" style="left:1068.85px;top:103.0px;width:26.18px;height:2px;background:#9c9658"></div><div class="ab" style="left:1051.00px;top:106.0px;width:7.14px;height:2px;background:#a82a5c"></div><div class="ab" style="left:1059.33px;top:106.0px;width:2.38px;height:2px;background:#9c9c98"></div><div class="ab" style="left:1062.90px;top:106.0px;width:4.76px;height:2px;background:#a82a5c"></div><div class="ab" style="left:1068.85px;top:106.0px;width:24.99px;height:2px;background:#9c9658"></div><div class="ab" style="left:1051.00px;top:109.0px;width:7.14px;height:2px;background:#a82a5c"></div><div class="ab" style="left:1059.33px;top:109.0px;width:2.38px;height:2px;background:#9c9c98"></div><div class="ab" style="left:1062.90px;top:109.0px;width:4.76px;height:2px;background:#a82a5c"></div><div class="ab" style="left:1068.85px;top:109.0px;width:33.32px;height:2px;background:#9c9658"></div><div class="ab" style="left:1051.00px;top:115.0px;width:4.76px;height:2px;background:#9c9c98"></div><div class="ab" style="left:1055.76px;top:115.0px;width:3.57px;height:2px;background:#6c9628"></div><div class="ab" style="left:1059.33px;top:115.0px;width:7.14px;height:2px;background:#9c9c98"></div><div class="ab" style="left:1051.00px;top:121.0px;width:7.14px;height:2px;background:#a82a5c"></div><div class="ab" style="left:1059.33px;top:121.0px;width:8.33px;height:2px;background:#a82a5c"></div><div class="ab" style="left:1068.85px;top:121.0px;width:3.57px;height:2px;background:#a82a5c"></div><div class="ab" style="left:1073.61px;top:121.0px;width:5.95px;height:2px;background:#9c9c98"></div><div class="ab" style="left:1079.56px;top:121.0px;width:5.95px;height:2px;background:#6c9628"></div><div class="ab" style="left:1085.51px;top:121.0px;width:2.38px;height:2px;background:#9c9c98"></div><div class="ab" style="left:1055.76px;top:124.0px;width:7.14px;height:2px;background:#9c9c98"></div><div class="ab" style="left:1064.09px;top:124.0px;width:1.19px;height:2px;background:#9c9c98"></div><div class="ab" style="left:1060.52px;top:127.0px;width:10.71px;height:2px;background:#9c9c98"></div><div class="ab" style="left:1072.42px;top:127.0px;width:5.95px;height:2px;background:#8462c0"></div><div class="ab" style="left:1078.37px;top:127.0px;width:1.19px;height:2px;background:#9c9c98"></div><div class="ab" style="left:1060.52px;top:130.0px;width:9.52px;height:2px;background:#9c9c98"></div><div class="ab" style="left:1071.23px;top:130.0px;width:4.76px;height:2px;background:#9c9c98"></div><div class="ab" style="left:1075.99px;top:130.0px;width:16.66px;height:2px;background:#6c9628"></div><div class="ab" style="left:1092.65px;top:130.0px;width:1.19px;height:2px;background:#9c9c98"></div><div class="ab" style="left:1093.84px;top:130.0px;width:5.95px;height:2px;background:#9c9658"></div><div class="ab" style="left:1099.79px;top:130.0px;width:1.19px;height:2px;background:#9c9c98"></div><div class="ab" style="left:1102.17px;top:130.0px;width:2.38px;height:2px;background:#a82a5c"></div><div class="ab" style="left:1105.74px;top:130.0px;width:8.33px;height:2px;background:#9c9658"></div><div class="ab" style="left:1114.07px;top:130.0px;width:1.19px;height:2px;background:#9c9c98"></div><div class="ab" style="left:1060.52px;top:133.0px;width:7.14px;height:2px;background:#9c9c98"></div><div class="ab" style="left:1068.85px;top:133.0px;width:2.38px;height:2px;background:#9c9658"></div><div class="ab" style="left:1071.23px;top:133.0px;width:1.19px;height:2px;background:#9c9c98"></div><div class="ab" style="left:1060.52px;top:136.0px;width:8.33px;height:2px;background:#9c9c98"></div><div class="ab" style="left:1070.04px;top:136.0px;width:4.76px;height:2px;background:#8462c0"></div><div class="ab" style="left:1074.80px;top:136.0px;width:1.19px;height:2px;background:#9c9c98"></div><div class="ab" style="left:1060.52px;top:139.0px;width:7.14px;height:2px;background:#9c9c98"></div><div class="ab" style="left:1068.85px;top:139.0px;width:4.76px;height:2px;background:#8462c0"></div><div class="ab" style="left:1073.61px;top:139.0px;width:1.19px;height:2px;background:#9c9c98"></div><div class="ab" style="left:1060.52px;top:142.0px;width:10.71px;height:2px;background:#9c9c98"></div><div class="ab" style="left:1072.42px;top:142.0px;width:3.57px;height:2px;background:#9c9c98"></div><div class="ab" style="left:1060.52px;top:145.0px;width:10.71px;height:2px;background:#9c9c98"></div><div class="ab" style="left:1072.42px;top:145.0px;width:1.19px;height:2px;background:#8462c0"></div><div class="ab" style="left:1073.61px;top:145.0px;width:1.19px;height:2px;background:#9c9c98"></div><div class="ab" style="left:1060.52px;top:148.0px;width:14.28px;height:2px;background:#9c9c98"></div><div class="ab" style="left:1075.99px;top:148.0px;width:1.19px;height:2px;background:#8462c0"></div><div class="ab" style="left:1077.18px;top:148.0px;width:1.19px;height:2px;background:#9c9c98"></div><div class="ab" style="left:1060.52px;top:151.0px;width:5.95px;height:2px;background:#9c9c98"></div><div class="ab" style="left:1067.66px;top:151.0px;width:4.76px;height:2px;background:#9c9c98"></div><div class="ab" style="left:1072.42px;top:151.0px;width:16.66px;height:2px;background:#6c9628"></div><div class="ab" style="left:1089.08px;top:151.0px;width:1.19px;height:2px;background:#9c9c98"></div><div class="ab" style="left:1090.27px;top:151.0px;width:7.14px;height:2px;background:#9c9658"></div><div class="ab" style="left:1097.41px;top:151.0px;width:1.19px;height:2px;background:#9c9c98"></div><div class="ab" style="left:1099.79px;top:151.0px;width:2.38px;height:2px;background:#a82a5c"></div><div class="ab" style="left:1103.36px;top:151.0px;width:4.76px;height:2px;background:#9c9658"></div><div class="ab" style="left:1055.76px;top:154.0px;width:2.38px;height:2px;background:#9c9c98"></div><div class="ab" style="left:1055.76px;top:157.0px;width:11.90px;height:2px;background:#9c9c98"></div><div class="ab" style="left:1068.85px;top:157.0px;width:1.19px;height:2px;background:#9c9c98"></div><div class="ab" style="left:1060.52px;top:160.0px;width:8.33px;height:2px;background:#6c9628"></div><div class="ab" style="left:1068.85px;top:160.0px;width:1.19px;height:2px;background:#9c9c98"></div><div class="ab" style="left:1070.04px;top:160.0px;width:5.95px;height:2px;background:#b8741e"></div><div class="ab" style="left:1075.99px;top:160.0px;width:1.19px;height:2px;background:#9c9c98"></div><div class="ab" style="left:1078.37px;top:160.0px;width:4.76px;height:2px;background:#b8741e"></div><div class="ab" style="left:1083.13px;top:160.0px;width:1.19px;height:2px;background:#9c9c98"></div><div class="ab" style="left:1085.51px;top:160.0px;width:1.19px;height:2px;background:#9c9c98"></div><div class="ab" style="left:1065.28px;top:163.0px;width:11.90px;height:2px;background:#9c9c98"></div><div class="ab" style="left:1078.37px;top:163.0px;width:1.19px;height:2px;background:#a82a5c"></div><div class="ab" style="left:1080.75px;top:163.0px;width:4.76px;height:2px;background:#9c9c98"></div><div class="ab" style="left:1060.52px;top:166.0px;width:2.38px;height:2px;background:#9c9c98"></div><div class="ab" style="left:1060.52px;top:169.0px;width:5.95px;height:2px;background:#6c9628"></div><div class="ab" style="left:1066.47px;top:169.0px;width:1.19px;height:2px;background:#9c9c98"></div><div class="ab" style="left:1067.66px;top:169.0px;width:5.95px;height:2px;background:#b8741e"></div><div class="ab" style="left:1073.61px;top:169.0px;width:1.19px;height:2px;background:#9c9c98"></div><div class="ab" style="left:1075.99px;top:169.0px;width:2.38px;height:2px;background:#b8741e"></div><div class="ab" style="left:1078.37px;top:169.0px;width:1.19px;height:2px;background:#9c9c98"></div><div class="ab" style="left:1080.75px;top:169.0px;width:1.19px;height:2px;background:#9c9c98"></div><div class="ab" style="left:1065.28px;top:172.0px;width:15.47px;height:2px;background:#9c9c98"></div><div class="ab" style="left:1081.94px;top:172.0px;width:1.19px;height:2px;background:#a82a5c"></div><div class="ab" style="left:1084.32px;top:172.0px;width:2.38px;height:2px;background:#9c9c98"></div><div class="ab" style="left:1065.28px;top:175.0px;width:2.38px;height:2px;background:#a82a5c"></div><div class="ab" style="left:1068.85px;top:175.0px;width:1.19px;height:2px;background:#9c9c98"></div><div class="ab" style="left:1070.04px;top:175.0px;width:8.33px;height:2px;background:#9c9658"></div><div class="ab" style="left:1079.56px;top:175.0px;width:2.38px;height:2px;background:#a82a5c"></div><div class="ab" style="left:1083.13px;top:175.0px;width:3.57px;height:2px;background:#9c9c98"></div><div class="ab" style="left:1087.89px;top:175.0px;width:1.19px;height:2px;background:#9c9c98"></div><div class="ab" style="left:1070.04px;top:178.0px;width:4.76px;height:2px;background:#9c9c98"></div><div class="ab" style="left:1074.80px;top:178.0px;width:16.66px;height:2px;background:#6c9628"></div><div class="ab" style="left:1091.46px;top:178.0px;width:1.19px;height:2px;background:#9c9c98"></div><div class="ab" style="left:1092.65px;top:178.0px;width:10.71px;height:2px;background:#9c9658"></div><div class="ab" style="left:1103.36px;top:178.0px;width:1.19px;height:2px;background:#9c9c98"></div><div class="ab" style="left:1105.74px;top:178.0px;width:4.76px;height:2px;background:#8462c0"></div><div class="ab" style="left:1110.50px;top:178.0px;width:1.19px;height:2px;background:#9c9c98"></div><div class="ab" style="left:1070.04px;top:181.0px;width:4.76px;height:2px;background:#9c9c98"></div><div class="ab" style="left:1074.80px;top:181.0px;width:16.66px;height:2px;background:#6c9628"></div><div class="ab" style="left:1091.46px;top:181.0px;width:1.19px;height:2px;background:#9c9c98"></div><div class="ab" style="left:1092.65px;top:181.0px;width:5.95px;height:2px;background:#9c9658"></div><div class="ab" style="left:1098.60px;top:181.0px;width:1.19px;height:2px;background:#9c9c98"></div><div class="ab" style="left:1100.98px;top:181.0px;width:8.33px;height:2px;background:#9c9658"></div><div class="ab" style="left:1109.31px;top:181.0px;width:1.19px;height:2px;background:#9c9c98"></div><div class="ab" style="left:1065.28px;top:184.0px;width:1.19px;height:2px;background:#9c9c98"></div><div class="ab" style="left:1067.66px;top:184.0px;width:4.76px;height:2px;background:#a82a5c"></div><div class="ab" style="left:1073.61px;top:184.0px;width:1.19px;height:2px;background:#9c9c98"></div><div class="ab" style="left:1070.04px;top:187.0px;width:4.76px;height:2px;background:#9c9c98"></div><div class="ab" style="left:1074.80px;top:187.0px;width:16.66px;height:2px;background:#6c9628"></div><div class="ab" style="left:1091.46px;top:187.0px;width:1.19px;height:2px;background:#9c9c98"></div><div class="ab" style="left:1092.65px;top:187.0px;width:10.71px;height:2px;background:#9c9658"></div><div class="ab" style="left:1103.36px;top:187.0px;width:1.19px;height:2px;background:#9c9c98"></div><div class="ab" style="left:1105.74px;top:187.0px;width:5.95px;height:2px;background:#8462c0"></div><div class="ab" style="left:1111.69px;top:187.0px;width:1.19px;height:2px;background:#9c9c98"></div><div class="ab" style="left:1050px;top:342px;width:75px;height:3px;background:#3a3b36;"></div><div class="ab" style="left:1070.04px;top:190.0px;width:4.76px;height:2px;background:#9c9c98"></div><div class="ab" style="left:1074.80px;top:190.0px;width:16.66px;height:2px;background:#6c9628"></div><div class="ab" style="left:1091.46px;top:190.0px;width:5.95px;height:2px;background:#9c9658"></div><div class="ab" style="left:1097.41px;top:190.0px;width:1.19px;height:2px;background:#9c9c98"></div><div class="ab" style="left:1099.79px;top:190.0px;width:8.33px;height:2px;background:#9c9658"></div><div class="ab" style="left:1108.12px;top:190.0px;width:1.19px;height:2px;background:#9c9c98"></div><div class="ab" style="left:1065.28px;top:193.0px;width:1.19px;height:2px;background:#9c9c98"></div><div class="ab" style="left:1060.98px;top:199.0px;width:2.11px;height:2px;background:#9c9c98"></div><div class="ab" style="left:1060.98px;top:202.0px;width:20.27px;height:2px;background:#6c9628"></div><div class="ab" style="left:1081.24px;top:202.0px;width:0.68px;height:2px;background:#9c9c98"></div><div class="ab" style="left:1081.92px;top:202.0px;width:6.50px;height:2px;background:#b8741e"></div><div class="ab" style="left:1088.42px;top:202.0px;width:0.59px;height:2px;background:#9c9c98"></div><div class="ab" style="left:1090.95px;top:202.0px;width:6.16px;height:2px;background:#b8741e"></div><div class="ab" style="left:1097.12px;top:202.0px;width:0.84px;height:2px;background:#9c9c98"></div><div class="ab" style="left:1098.97px;top:202.0px;width:1.01px;height:2px;background:#9c9c98"></div><div class="ab" style="left:1065.03px;top:205.0px;width:20.86px;height:2px;background:#9c9c98"></div><div class="ab" style="left:1086.98px;top:205.0px;width:1.01px;height:2px;background:#a82a5c"></div><div class="ab" style="left:1089.01px;top:205.0px;width:8.02px;height:2px;background:#9c9c98"></div><div class="ab" style="left:1060.98px;top:208.0px;width:2.11px;height:2px;background:#9c9c98"></div><div class="ab" style="left:1060.98px;top:211.0px;width:9.29px;height:2px;background:#6c9628"></div><div class="ab" style="left:1070.27px;top:211.0px;width:0.68px;height:2px;background:#9c9c98"></div><div class="ab" style="left:1070.94px;top:211.0px;width:6.08px;height:2px;background:#b8741e"></div><div class="ab" style="left:1077.02px;top:211.0px;width:1.86px;height:2px;background:#9c9c98"></div><div class="ab" style="left:1080.14px;top:211.0px;width:6.16px;height:2px;background:#b8741e"></div><div class="ab" style="left:1086.31px;top:211.0px;width:0.68px;height:2px;background:#9c9c98"></div><div class="ab" style="left:1088.00px;top:211.0px;width:1.01px;height:2px;background:#9c9c98"></div><div class="ab" style="left:1065.03px;top:214.0px;width:17.06px;height:2px;background:#9c9c98"></div><div class="ab" style="left:1083.10px;top:214.0px;width:1.86px;height:2px;background:#a82a5c"></div><div class="ab" style="left:1086.14px;top:214.0px;width:5.83px;height:2px;background:#9c9c98"></div><div class="ab" style="left:1060.98px;top:217.0px;width:2.11px;height:2px;background:#9c9c98"></div><div class="ab" style="left:1060.98px;top:220.0px;width:16.04px;height:2px;background:#6c9628"></div><div class="ab" style="left:1077.02px;top:220.0px;width:2.96px;height:2px;background:#9c9c98"></div><div class="ab" style="left:1081.07px;top:220.0px;width:1.01px;height:2px;background:#9c9c98"></div><div class="ab" style="left:1065.03px;top:223.0px;width:17.06px;height:2px;background:#9c9c98"></div><div class="ab" style="left:1083.10px;top:223.0px;width:1.86px;height:2px;background:#a82a5c"></div><div class="ab" style="left:1086.14px;top:223.0px;width:4.98px;height:2px;background:#8462c0"></div><div class="ab" style="left:1060.98px;top:229.0px;width:2.11px;height:2px;background:#9c9c98"></div><div class="ab" style="left:1060.98px;top:232.0px;width:6.33px;height:2px;background:#6c9628"></div><div class="ab" style="left:1067.31px;top:232.0px;width:0.84px;height:2px;background:#9c9c98"></div><div class="ab" style="left:1068.15px;top:232.0px;width:6.16px;height:2px;background:#b8741e"></div><div class="ab" style="left:1074.32px;top:232.0px;width:0.76px;height:2px;background:#9c9c98"></div><div class="ab" style="left:1076.18px;top:232.0px;width:6.33px;height:2px;background:#b8741e"></div><div class="ab" style="left:1082.51px;top:232.0px;width:0.59px;height:2px;background:#9c9c98"></div><div class="ab" style="left:1084.79px;top:232.0px;width:1.35px;height:2px;background:#9c9c98"></div><div class="ab" style="left:1065.03px;top:238.0px;width:17.06px;height:2px;background:#9c9c98"></div><div class="ab" style="left:1083.10px;top:238.0px;width:1.86px;height:2px;background:#a82a5c"></div><div class="ab" style="left:1086.14px;top:238.0px;width:4.98px;height:2px;background:#8462c0"></div><div class="ab" style="left:1065.03px;top:241.0px;width:13.93px;height:2px;background:#9c9c98"></div><div class="ab" style="left:1079.98px;top:241.0px;width:1.01px;height:2px;background:#a82a5c"></div><div class="ab" style="left:1082.09px;top:241.0px;width:5.91px;height:2px;background:#9c9c98"></div><div class="ab" style="left:1065.03px;top:244.0px;width:5.07px;height:2px;background:#9c9c98"></div><div class="ab" style="left:1070.10px;top:244.0px;width:16.89px;height:2px;background:#6c9628"></div><div class="ab" style="left:1086.98px;top:244.0px;width:1.01px;height:2px;background:#9c9c98"></div><div class="ab" style="left:1088.00px;top:244.0px;width:9.29px;height:2px;background:#9c9658"></div><div class="ab" style="left:1097.29px;top:244.0px;width:0.84px;height:2px;background:#9c9c98"></div><div class="ab" style="left:1099.14px;top:244.0px;width:6.76px;height:2px;background:#9c9c98"></div><div class="ab" style="left:1060.98px;top:247.0px;width:2.11px;height:2px;background:#9c9c98"></div><div class="ab" style="left:1060.98px;top:250.0px;width:7.18px;height:2px;background:#6c9628"></div><div class="ab" style="left:1068.15px;top:250.0px;width:0.84px;height:2px;background:#9c9c98"></div><div class="ab" style="left:1069.00px;top:250.0px;width:6.16px;height:2px;background:#b8741e"></div><div class="ab" style="left:1075.16px;top:250.0px;width:0.84px;height:2px;background:#9c9c98"></div><div class="ab" style="left:1077.02px;top:250.0px;width:2.11px;height:2px;background:#9c9c98"></div><div class="ab" style="left:1065.03px;top:253.0px;width:13.93px;height:2px;background:#9c9c98"></div><div class="ab" style="left:1079.98px;top:253.0px;width:1.01px;height:2px;background:#a82a5c"></div><div class="ab" style="left:1082.09px;top:253.0px;width:2.96px;height:2px;background:#9c9c98"></div><div class="ab" style="left:1065.03px;top:256.0px;width:13.93px;height:2px;background:#9c9c98"></div><div class="ab" style="left:1079.98px;top:256.0px;width:1.01px;height:2px;background:#a82a5c"></div><div class="ab" style="left:1082.09px;top:256.0px;width:2.96px;height:2px;background:#9c9658"></div><div class="ab" style="left:1065.03px;top:259.0px;width:5.07px;height:2px;background:#9c9c98"></div><div class="ab" style="left:1070.10px;top:259.0px;width:21.11px;height:2px;background:#6c9628"></div><div class="ab" style="left:1091.21px;top:259.0px;width:0.84px;height:2px;background:#9c9c98"></div><div class="ab" style="left:1092.05px;top:259.0px;width:7.35px;height:2px;background:#9c9658"></div><div class="ab" style="left:1099.40px;top:259.0px;width:0.68px;height:2px;background:#9c9c98"></div><div class="ab" style="left:1065.03px;top:262.0px;width:5.07px;height:2px;background:#9c9c98"></div><div class="ab" style="left:1070.10px;top:262.0px;width:21.11px;height:2px;background:#6c9628"></div><div class="ab" style="left:1091.21px;top:262.0px;width:0.84px;height:2px;background:#9c9c98"></div><div class="ab" style="left:1092.05px;top:262.0px;width:8.36px;height:2px;background:#9c9658"></div><div class="ab" style="left:1100.41px;top:262.0px;width:0.68px;height:2px;background:#9c9c98"></div><div class="ab" style="left:1065.03px;top:265.0px;width:17.06px;height:2px;background:#9c9c98"></div><div class="ab" style="left:1083.10px;top:265.0px;width:1.86px;height:2px;background:#a82a5c"></div><div class="ab" style="left:1086.14px;top:265.0px;width:5.91px;height:2px;background:#8462c0"></div><div class="ab" style="left:1060.97px;top:268.0px;width:2.11px;height:2px;background:#9c9c98"></div><div class="ab" style="left:1060.97px;top:271.0px;width:8.27px;height:2px;background:#6c9628"></div><div class="ab" style="left:1069.24px;top:271.0px;width:0.59px;height:2px;background:#9c9c98"></div><div class="ab" style="left:1069.83px;top:271.0px;width:6.33px;height:2px;background:#b8741e"></div><div class="ab" style="left:1076.15px;top:271.0px;width:0.67px;height:2px;background:#9c9c98"></div><div class="ab" style="left:1079.11px;top:271.0px;width:3.97px;height:2px;background:#b8741e"></div><div class="ab" style="left:1083.07px;top:271.0px;width:1.69px;height:2px;background:#9c9c98"></div><div class="ab" style="left:1086.11px;top:271.0px;width:0.84px;height:2px;background:#9c9c98"></div><div class="ab" style="left:1065.02px;top:274.0px;width:13.92px;height:2px;background:#9c9c98"></div><div class="ab" style="left:1079.95px;top:274.0px;width:1.01px;height:2px;background:#a82a5c"></div><div class="ab" style="left:1082.06px;top:274.0px;width:4.89px;height:2px;background:#9c9c98"></div><div class="ab" style="left:1065.02px;top:277.0px;width:5.06px;height:2px;background:#9c9c98"></div><div class="ab" style="left:1070.08px;top:277.0px;width:17.04px;height:2px;background:#6c9628"></div><div class="ab" style="left:1087.12px;top:277.0px;width:0.84px;height:2px;background:#9c9c98"></div><div class="ab" style="left:1087.97px;top:277.0px;width:7.17px;height:2px;background:#9c9658"></div><div class="ab" style="left:1095.14px;top:277.0px;width:1.69px;height:2px;background:#9c9c98"></div><div class="ab" style="left:1098.09px;top:277.0px;width:4.89px;height:2px;background:#4a9cb4"></div><div class="ab" style="left:1102.98px;top:277.0px;width:1.01px;height:2px;background:#9c9c98"></div><div class="ab" style="left:1103.99px;top:277.0px;width:10.97px;height:2px;background:#4a9cb4"></div><div class="ab" style="left:1114.96px;top:277.0px;width:8.01px;height:2px;background:#9c9c98"></div><div class="ab" style="left:1060.97px;top:280.0px;width:2.11px;height:2px;background:#9c9c98"></div><div class="ab" style="left:1060.97px;top:283.0px;width:13.08px;height:2px;background:#6c9628"></div><div class="ab" style="left:1074.04px;top:283.0px;width:1.01px;height:2px;background:#9c9c98"></div><div class="ab" style="left:1075.06px;top:283.0px;width:6.16px;height:2px;background:#b8741e"></div><div class="ab" style="left:1081.22px;top:283.0px;width:0.67px;height:2px;background:#9c9c98"></div><div class="ab" style="left:1083.07px;top:283.0px;width:5.06px;height:2px;background:#b8741e"></div><div class="ab" style="left:1088.13px;top:283.0px;width:0.84px;height:2px;background:#9c9c98"></div><div class="ab" style="left:1090.92px;top:283.0px;width:1.01px;height:2px;background:#9c9c98"></div><div class="ab" style="left:1065.02px;top:286.0px;width:17.04px;height:2px;background:#9c9c98"></div><div class="ab" style="left:1083.07px;top:286.0px;width:1.86px;height:2px;background:#a82a5c"></div><div class="ab" style="left:1086.11px;top:286.0px;width:4.98px;height:2px;background:#9c9c98"></div><div class="ab" style="left:1060.97px;top:292.0px;width:2.11px;height:2px;background:#9c9c98"></div><div class="ab" style="left:1060.97px;top:295.0px;width:9.11px;height:2px;background:#6c9628"></div><div class="ab" style="left:1070.08px;top:295.0px;width:1.01px;height:2px;background:#9c9c98"></div><div class="ab" style="left:1071.09px;top:295.0px;width:5.91px;height:2px;background:#b8741e"></div><div class="ab" style="left:1077.00px;top:295.0px;width:1.94px;height:2px;background:#9c9c98"></div><div class="ab" style="left:1079.95px;top:295.0px;width:1.01px;height:2px;background:#9c9c98"></div><div class="ab" style="left:1065.02px;top:298.0px;width:3.97px;height:2px;background:#4a9cb4"></div><div class="ab" style="left:1070.08px;top:298.0px;width:4.98px;height:2px;background:#9c9c98"></div><div class="ab" style="left:1075.98px;top:298.0px;width:1.01px;height:2px;background:#a82a5c"></div><div class="ab" style="left:1079.11px;top:298.0px;width:3.80px;height:2px;background:#9c9c98"></div><div class="ab" style="left:1082.90px;top:298.0px;width:17.04px;height:2px;background:#6c9628"></div><div class="ab" style="left:1099.95px;top:298.0px;width:1.01px;height:2px;background:#9c9c98"></div><div class="ab" style="left:1100.96px;top:298.0px;width:8.10px;height:2px;background:#9c9658"></div><div class="ab" style="left:1109.06px;top:298.0px;width:0.84px;height:2px;background:#9c9c98"></div><div class="ab" style="left:1065.02px;top:301.0px;width:2.95px;height:2px;background:#a82a5c"></div><div class="ab" style="left:1068.98px;top:301.0px;width:6.92px;height:2px;background:#9c9c98"></div><div class="ab" style="left:1077.00px;top:301.0px;width:1.94px;height:2px;background:#9c9c98"></div><div class="ab" style="left:1069.99px;top:304.0px;width:5.06px;height:2px;background:#b8741e"></div><div class="ab" style="left:1075.06px;top:304.0px;width:5.91px;height:2px;background:#9c9c98"></div><div class="ab" style="left:1082.06px;top:304.0px;width:0.84px;height:2px;background:#a82a5c"></div><div class="ab" style="left:1085.01px;top:304.0px;width:3.97px;height:2px;background:#4a9cb4"></div><div class="ab" style="left:1088.98px;top:304.0px;width:1.94px;height:2px;background:#9c9c98"></div><div class="ab" style="left:1090.92px;top:304.0px;width:6.07px;height:2px;background:#4a9cb4"></div><div class="ab" style="left:1096.99px;top:304.0px;width:7.00px;height:2px;background:#9c9c98"></div><div class="ab" style="left:1069.99px;top:307.0px;width:5.06px;height:2px;background:#b8741e"></div><div class="ab" style="left:1075.06px;top:307.0px;width:10.80px;height:2px;background:#9c9c98"></div><div class="ab" style="left:1086.95px;top:307.0px;width:1.01px;height:2px;background:#a82a5c"></div><div class="ab" style="left:1088.98px;top:307.0px;width:5.06px;height:2px;background:#8462c0"></div><div class="ab" style="left:1065.02px;top:310.0px;width:1.86px;height:2px;background:#9c9c98"></div><div class="ab" style="left:1060.97px;top:313.0px;width:1.01px;height:2px;background:#9c9c98"></div><div class="ab" style="left:1055.91px;top:322.0px;width:2.11px;height:2px;background:#9c9c98"></div><div class="ab" style="left:1055.91px;top:325.0px;width:9.11px;height:2px;background:#9c9c98"></div><div class="ab" style="left:1066.87px;top:325.0px;width:1.01px;height:2px;background:#9c9c98"></div><div class="ab" style="left:1060.97px;top:328.0px;width:15.02px;height:2px;background:#6c9628"></div><div class="ab" style="left:1075.98px;top:328.0px;width:2.95px;height:2px;background:#9c9c98"></div><div class="ab" style="left:1065.02px;top:331.0px;width:6.07px;height:2px;background:#b8741e"></div><div class="ab" style="left:1071.09px;top:331.0px;width:1.86px;height:2px;background:#9c9c98"></div><div class="ab" style="left:1065.02px;top:334.0px;width:10.04px;height:2px;background:#b8741e"></div><div class="ab" style="left:1060.97px;top:337.0px;width:2.11px;height:2px;background:#9c9c98"></div><div class="ab" style="left:1063.92px;top:337.0px;width:1.10px;height:2px;background:#9c9c98"></div><div class="ab" style="left:1065.02px;top:343.0px;width:6.07px;height:2px;background:#4a9cb4"></div><div class="ab" style="left:1072.95px;top:343.0px;width:8.01px;height:2px;background:#9c9c98"></div><div class="ab" style="left:1082.06px;top:343.0px;width:1.01px;height:2px;background:#a82a5c"></div><div class="ab" style="left:1085.01px;top:343.0px;width:1.94px;height:2px;background:#6c9628"></div><div class="ab" style="left:1086.95px;top:343.0px;width:1.01px;height:2px;background:#9c9c98"></div><div class="ab" style="left:1087.97px;top:343.0px;width:25.31px;height:2px;background:#9c9658"></div><div class="ab" style="left:1113.28px;top:343.0px;width:1.69px;height:2px;background:#9c9c98"></div><div class="ab" style="left:1115.81px;top:343.0px;width:1.27px;height:2px;background:#9c9c98"></div><div class="ab" style="left:1069.99px;top:346.0px;width:7.00px;height:2px;background:#9c9c98"></div><div class="ab" style="left:1078.94px;top:346.0px;width:3.12px;height:2px;background:#9c9c98"></div><div class="ab" style="left:1069.99px;top:349.0px;width:12.91px;height:2px;background:#9c9c98"></div><div class="ab" style="left:1085.01px;top:349.0px;width:0.84px;height:2px;background:#9c9c98"></div><div class="ab" style="left:1085.86px;top:349.0px;width:13.50px;height:2px;background:#9c9658"></div><div class="ab" style="left:1099.35px;top:349.0px;width:0.59px;height:2px;background:#9c9c98"></div><div class="ab" style="left:1100.96px;top:349.0px;width:11.05px;height:2px;background:#9c9658"></div><div class="ab" style="left:1112.01px;top:349.0px;width:2.95px;height:2px;background:#9c9c98"></div><div class="ab" style="left:1070.00px;top:352.0px;width:15.85px;height:2px;background:#9c9c98"></div><div class="ab" style="left:1086.98px;top:352.0px;width:5.94px;height:2px;background:#8462c0"></div><div class="ab" style="left:1070.00px;top:355.0px;width:10.00px;height:2px;background:#9c9c98"></div><div class="ab" style="left:1081.13px;top:355.0px;width:4.72px;height:2px;background:#8462c0"></div><div class="ab" style="left:1064.91px;top:361.0px;width:3.02px;height:2px;background:#9c9c98"></div><div class="ab" style="left:1064.91px;top:376.0px;width:10.09px;height:2px;background:#9c9c98"></div><div class="ab" style="left:1075.00px;top:376.0px;width:1.89px;height:2px;background:#6c9628"></div><div class="ab" style="left:1076.89px;top:376.0px;width:1.89px;height:2px;background:#9c9c98"></div><div class="ab" style="left:1078.77px;top:376.0px;width:10.09px;height:2px;background:#9c9658"></div><div class="ab" style="left:1088.87px;top:376.0px;width:1.89px;height:2px;background:#9c9c98"></div><div class="ab" style="left:1091.98px;top:376.0px;width:1.89px;height:2px;background:#9c9c98"></div><div class="ab" style="left:1095.00px;top:376.0px;width:2.92px;height:2px;background:#4a9cb4"></div><div class="ab" style="left:1099.06px;top:376.0px;width:0.94px;height:2px;background:#9c9c98"></div><div class="ab" style="left:1070.00px;top:379.0px;width:8.96px;height:2px;background:#9c9c98"></div><div class="ab" style="left:1078.96px;top:379.0px;width:1.04px;height:2px;background:#a82a5c"></div><div class="ab" style="left:1080.00px;top:379.0px;width:3.02px;height:2px;background:#4a9cb4"></div><div class="ab" style="left:1083.02px;top:379.0px;width:1.89px;height:2px;background:#9c9c98"></div><div class="ab" style="left:1084.91px;top:379.0px;width:7.08px;height:2px;background:#9c9658"></div><div class="ab" style="left:1091.98px;top:379.0px;width:1.89px;height:2px;background:#9c9c98"></div><div class="ab" style="left:1070.00px;top:382.0px;width:14.91px;height:2px;background:#9c9c98"></div><div class="ab" style="left:1086.04px;top:382.0px;width:0.94px;height:2px;background:#a82a5c"></div><div class="ab" style="left:1087.92px;top:382.0px;width:9.06px;height:2px;background:#9c9c98"></div><div class="ab" style="left:1070.00px;top:385.0px;width:5.94px;height:2px;background:#4a9cb4"></div><div class="ab" style="left:1076.89px;top:385.0px;width:2.08px;height:2px;background:#9c9c98"></div><div class="ab" style="left:1075.00px;top:388.0px;width:1.89px;height:2px;background:#9c9c98"></div><div class="ab" style="left:1070.00px;top:391.0px;width:0.94px;height:2px;background:#9c9c98"></div><div class="ab" style="left:1072.92px;top:391.0px;width:1.13px;height:2px;background:#a82a5c"></div><div class="ab" style="left:1075.00px;top:391.0px;width:8.02px;height:2px;background:#9c9c98"></div><div class="ab" style="left:1064.91px;top:400.0px;width:3.02px;height:2px;background:#9c9c98"></div><div class="ab" style="left:1064.91px;top:406.0px;width:10.09px;height:2px;background:#9c9c98"></div><div class="ab" style="left:1075.00px;top:406.0px;width:1.89px;height:2px;background:#6c9628"></div><div class="ab" style="left:1076.89px;top:406.0px;width:1.89px;height:2px;background:#9c9c98"></div><div class="ab" style="left:1078.77px;top:406.0px;width:8.21px;height:2px;background:#9c9658"></div><div class="ab" style="left:1086.98px;top:406.0px;width:0.94px;height:2px;background:#9c9c98"></div><div class="ab" style="left:1088.96px;top:406.0px;width:3.02px;height:2px;background:#9c9c98"></div><div class="ab" style="left:1092.92px;top:406.0px;width:2.08px;height:2px;background:#4a9cb4"></div><div class="ab" style="left:1096.98px;top:406.0px;width:0.94px;height:2px;background:#9c9c98"></div><div class="ab" style="left:1070.00px;top:409.0px;width:14.91px;height:2px;background:#9c9c98"></div><div class="ab" style="left:1086.04px;top:409.0px;width:0.94px;height:2px;background:#a82a5c"></div><div class="ab" style="left:1087.92px;top:409.0px;width:5.00px;height:2px;background:#8462c0"></div><div class="ab" style="left:1070.00px;top:412.0px;width:8.96px;height:2px;background:#9c9c98"></div><div class="ab" style="left:1078.96px;top:412.0px;width:1.04px;height:2px;background:#a82a5c"></div><div class="ab" style="left:1080.00px;top:412.0px;width:3.02px;height:2px;background:#4a9cb4"></div><div class="ab" style="left:1083.02px;top:412.0px;width:1.89px;height:2px;background:#9c9c98"></div><div class="ab" style="left:1084.91px;top:412.0px;width:9.25px;height:2px;background:#9c9658"></div><div class="ab" style="left:1094.15px;top:412.0px;width:0.85px;height:2px;background:#9c9c98"></div><div class="ab" style="left:1064.91px;top:415.0px;width:3.02px;height:2px;background:#9c9c98"></div><div class="ab" style="left:1064.91px;top:418.0px;width:10.09px;height:2px;background:#9c9c98"></div><div class="ab" style="left:1075.00px;top:418.0px;width:1.89px;height:2px;background:#6c9628"></div><div class="ab" style="left:1076.89px;top:418.0px;width:1.89px;height:2px;background:#9c9c98"></div><div class="ab" style="left:1078.77px;top:418.0px;width:14.15px;height:2px;background:#9c9658"></div><div class="ab" style="left:1092.92px;top:418.0px;width:0.94px;height:2px;background:#9c9c98"></div><div class="ab" style="left:1095.00px;top:418.0px;width:2.92px;height:2px;background:#9c9c98"></div><div class="ab" style="left:1099.06px;top:418.0px;width:1.89px;height:2px;background:#4a9cb4"></div><div class="ab" style="left:1103.02px;top:418.0px;width:0.94px;height:2px;background:#9c9c98"></div><div class="ab" style="left:1070.00px;top:421.0px;width:14.91px;height:2px;background:#9c9c98"></div><div class="ab" style="left:1086.04px;top:421.0px;width:0.94px;height:2px;background:#a82a5c"></div><div class="ab" style="left:1087.92px;top:421.0px;width:5.00px;height:2px;background:#8462c0"></div><div class="ab" style="left:1070.00px;top:424.0px;width:8.96px;height:2px;background:#9c9c98"></div><div class="ab" style="left:1078.96px;top:424.0px;width:1.04px;height:2px;background:#a82a5c"></div><div class="ab" style="left:1080.00px;top:424.0px;width:3.02px;height:2px;background:#4a9cb4"></div><div class="ab" style="left:1083.02px;top:424.0px;width:1.89px;height:2px;background:#9c9c98"></div><div class="ab" style="left:1084.91px;top:424.0px;width:7.08px;height:2px;background:#9c9658"></div><div class="ab" style="left:1091.98px;top:424.0px;width:1.89px;height:2px;background:#9c9c98"></div><div class="ab" style="left:1064.91px;top:427.0px;width:3.02px;height:2px;background:#9c9c98"></div><div class="ab" style="left:1060.85px;top:430.0px;width:1.13px;height:2px;background:#9c9c98"></div><div class="ab" style="left:1055.85px;top:433.0px;width:1.23px;height:2px;background:#9c9c98"></div><div class="ab" style="left:1050.94px;top:436.0px;width:2.08px;height:2px;background:#9c9c98"></div><div class="ab" style="left:1125px;top:96px;width:8px;height:147px;background:#808080;"></div><div class="ab" style="left:1125px;top:243px;width:8px;height:537px;background:#272822;"></div><div class="ab" style="left:1px;top:781px;width:1132px;height:201px;background:#20211d;"></div><div class="t" style="left:23px;top:808px;font-size:14px;color:#f0f0f0;">st5_lcai - Web</div><div class="ab" style="left:18px;top:828px;width:117px;height:1px;background:#d0d0d0;"></div><svg style="left:955px;top:806px;" width="13" height="15" viewBox="0 0 13 15"><ellipse cx="6.5" cy="8.5" rx="4" ry="5.5" fill="none" stroke="#c0c0c0" stroke-width="1.2"/><path d="M6.5 3 V14 M2.5 7 H0 M10.5 7 H13 M2.5 11 L0 13 M10.5 11 L13 13" fill="none" stroke="#c0c0c0" stroke-width="1.2"/></svg><svg style="left:985px;top:806px;" width="14" height="14" viewBox="0 0 14 14"><path d="M12.5 7 A5.5 5.5 0 1 1 7 1.5" fill="none" stroke="#c0c0c0" stroke-width="1.2"/><path d="M5.5 4.5 L9.5 7 L5.5 9.5 Z" fill="#c0c0c0"/></svg><svg style="left:1015px;top:807px;" width="13" height="13" viewBox="0 0 13 13"><rect x="0.5" y="0.5" width="12" height="12" fill="none" stroke="#c8c8c8" stroke-width="1.2"/><rect x="2.5" y="2.5" width="8" height="8" fill="#c8c8c8"/></svg><svg style="left:1044px;top:806px;" width="15" height="14" viewBox="0 0 15 14"><path d="M9 1.5 H0.5 V13.5 H14.5 V7" fill="none" stroke="#c0c0c0" stroke-width="1.2"/><path d="M3 5 L6 7.5 L3 10 M7 11 H10 M12 0 V5 M9.5 2.5 H14.5" fill="none" stroke="#c0c0c0" stroke-width="1.2"/></svg><svg style="left:1074px;top:809px;" width="14" height="8" viewBox="0 0 14 8"><path d="M0.5 7.5 L7 1 L13.5 7.5" fill="none" stroke="#c8c8c8" stroke-width="1.3"/></svg><svg style="left:1104px;top:807px;" width="16" height="13" viewBox="0 0 16 13"><path d="M0.5 1 L7 12 M7 1 L0.5 12 M12 0 V11 M9 8 L12 12 L15 8" fill="none" stroke="#c0c0c0" stroke-width="1.2"/></svg><div class="t" style="left:32px;top:847px;font-family:'Liberation Mono',monospace;font-size:15px;line-height:20px;color:#f0f0f0"><span style="color:#3db5e6;text-decoration:underline;text-underline-offset:1px;text-decoration-skip-ink:none">/request.js:14</span></div><div class="t" style="left:32px;top:867px;font-family:'Liberation Mono',monospace;font-size:15px;line-height:20px;color:#f0f0f0"><span style="color:#b0b0b0">20:03:02.968 </span>:::::::::::::::::::::::::::::::::::::::::::::::::::::::: <span style="color:#3db5e6;text-decoration:underline;text-underline-offset:1px;text-decoration-skip-ink:none">at common/request.js:106</span></div><div class="t" style="left:32px;top:887px;font-family:'Liberation Mono',monospace;font-size:15px;line-height:20px;color:#f0f0f0"><span style="color:#b0b0b0">20:03:02.968 </span><span style="color:#3db5e6;text-decoration:underline;text-underline-offset:1px;text-decoration-skip-ink:none">https://st5.amspay.cc/api/v1/user</span> <span style="color:#3db5e6;text-decoration:underline;text-underline-offset:1px;text-decoration-skip-ink:none">at common/request.js:107</span></div><div class="t" style="left:32px;top:907px;font-family:'Liberation Mono',monospace;font-size:15px;line-height:20px;color:#f0f0f0"><span style="color:#b0b0b0">20:03:02.968 </span>:::::::::::::::::::::::::::::::::::::::::::::::::::::::: <span style="color:#3db5e6;text-decoration:underline;text-underline-offset:1px;text-decoration-skip-ink:none">at common/request.js:108</span></div><div class="t" style="left:32px;top:927px;font-family:'Liberation Mono',monospace;font-size:15px;line-height:20px;color:#f0f0f0"><span style="color:#b0b0b0">20:03:03.106 </span>{url: <span style="color:#e6db74">"</span><span style="color:#3db5e6;text-decoration:underline;text-underline-offset:1px;text-decoration-skip-ink:none">https://st5.amspay.cc/api/v1/user</span><span style="color:#e6db74">"</span>, data: { <span style="color:#3db5e6;text-decoration:underline;text-underline-offset:1px;text-decoration-skip-ink:none">...</span> }, method: <span style="color:#e6db74">"GET"</span>, header: { <span style="color:#3db5e6;text-decoration:underline;text-underline-offset:1px;text-decoration-skip-ink:none">...</span> }} <span style="color:#3db5e6;text-decoration:underline;text-underline-offset:1px;text-decoration-skip-ink:none">at common/request</span></div><div class="t" style="left:32px;top:947px;font-family:'Liberation Mono',monospace;font-size:15px;line-height:20px;color:#f0f0f0"><span style="color:#3db5e6;text-decoration:underline;text-underline-offset:1px;text-decoration-skip-ink:none">.js:14</span></div><div class="ab" style="left:1125px;top:966px;width:8px;height:16px;background:#2a2b26;"></div><div class="ab" style="left:1px;top:982px;width:1517px;height:24px;background:#555555;border-radius:0 0 8px 8px"></div><svg style="left:29px;top:986px;" width="15" height="15" viewBox="0 0 15 15"><circle cx="7.5" cy="7.5" r="6.8" fill="none" stroke="#c0c0c0" stroke-width="1.1"/><circle cx="7.5" cy="6" r="2.6" fill="#c0c0c0"/><path d="M3 12.5 Q7.5 7 12 12.5" fill="#c0c0c0"/></svg><div class="t" style="left:49px;top:988px;font-size:13px;color:#e8e8e8;">1735031199@qq.com</div><svg style="left:234px;top:988px;" width="13" height="11" viewBox="0 0 13 11"><path d="M0 1 H2 M4 1 H13 M0 5.5 H2 M4 5.5 H13 M0 10 H2 M4 10 H13" stroke="#d0d0d0" stroke-width="1.2"/></svg><svg style="left:259px;top:987px;" width="14" height="12" viewBox="0 0 14 12"><rect x="0.5" y="0.5" width="13" height="11" fill="none" stroke="#d0d0d0" stroke-width="1"/><path d="M3 3.5 L5.5 5.5 L3 7.5 M6.5 8.5 H10" fill="none" stroke="#d0d0d0" stroke-width="1"/></svg><div class="t" style="left:1104px;top:988.5px;font-size:12.2px;color:#e0e0e0;">语法提示库</div><div class="t" style="left:1189px;top:988px;font-size:13px;color:#e0e0e0;">行:83</div><div class="t" style="left:1229px;top:988px;font-size:13px;color:#e0e0e0;">列:39</div><div class="t" style="left:1284px;top:988px;font-size:13px;color:#e0e0e0;">UTF-8</div><div class="t" style="left:1344px;top:988px;font-size:13px;color:#e0e0e0;">JavaScript</div><svg style="left:1421px;top:987px;" width="14" height="14" viewBox="0 0 14 14"><circle cx="7" cy="7" r="6" fill="#e8e8e8"/><path d="M10 11 L13 13" stroke="#e8e8e8" stroke-width="2"/><path d="M4.5 4 V9 H9.5 V4" fill="none" stroke="#555" stroke-width="1.5"/></svg><svg style="left:1449px;top:985px;" width="16" height="16" viewBox="0 0 16 16"><circle cx="8" cy="8" r="7.5" fill="#f0f0f0"/><path d="M8 3.5 V11.5 M4.8 8.5 L8 11.7 L11.2 8.5" fill="none" stroke="#555" stroke-width="1.8"/></svg><svg style="left:1479px;top:986px;" width="14" height="15" viewBox="0 0 14 15"><path d="M7 0.5 L9.5 2 L10.5 4 V9.5 L13 12 H1 L3.5 9.5 V4 L4.5 2 Z" fill="#b0a680"/><path d="M5 12.8 H9 L7 14.3 Z" fill="#b0a680"/></svg><div class="ab" style="left:1133px;top:60px;width:1px;height:922px;background:#1a1b17;"></div><div class="ab" style="left:1134px;top:60px;width:384px;height:922px;background:#272822;"></div><div class="ab" style="left:1244px;top:60px;width:274px;height:28px;background:#1e1f1b;"></div><div class="t" style="left:1145px;top:68px;font-size:13px;color:#d8d8d8;">Web浏览器</div><svg style="left:1221px;top:70px;" width="9" height="9" viewBox="0 0 9 9"><path d="M0.5 0.5 L8.5 8.5 M8.5 0.5 L0.5 8.5" stroke="#d0d0d0" stroke-width="1.1"/></svg><div class="ab" style="left:1140px;top:95px;width:372px;height:27px;background:transparent;border:1px solid #6e6e6a"></div><div class="t" style="left:1149px;top:102px;font-size:13.4px;color:#d8d8d8;">http://localhost:8000/#/pages/users/users</div><div class="ab" style="left:1140px;top:127px;width:120px;height:27px;background:transparent;border:1px solid #1a1a35"></div><div class="t" style="left:1146px;top:134px;font-size:13px;color:#d8d8d8;">iPhone X</div><svg style="left:1247px;top:138px;" width="8" height="5" viewBox="0 0 8 5"><path d="M0 0 H8 L4 5 Z" fill="#d0d0d0"/></svg><svg style="left:1272px;top:133px;" width="14" height="14" viewBox="0 0 14 14"><path d="M0.5 5 V13.5 H13.5 V0.5 H5" fill="none" stroke="#e8e8e8" stroke-width="1.2"/><path d="M1.5 1.5 L8 8" stroke="#e8e8e8" stroke-width="1.2"/><path d="M0.5 0.5 H5 L0.5 5 Z" fill="#e8e8e8"/></svg><svg style="left:1301px;top:133px;" width="14" height="14" viewBox="0 0 14 14"><circle cx="7" cy="7" r="2" fill="none" stroke="#e0e0e0" stroke-width="1.2"/><path d="M7 0.8 L9 2.5 L11.5 2.5 L12 5 L13.5 7 L12 9 L11.5 11.5 L9 11.5 L7 13.2 L5 11.5 L2.5 11.5 L2 9 L0.5 7 L2 5 L2.5 2.5 L5 2.5 Z" fill="none" stroke="#e0e0e0" stroke-width="1.1"/></svg><svg style="left:1332px;top:134px;" width="14" height="12" viewBox="0 0 14 12"><rect x="0.5" y="0.5" width="13" height="11" fill="none" stroke="#e8e8e8" stroke-width="1.1"/><path d="M3 3 L5.5 5.2 L3 7.4" fill="none" stroke="#e8e8e8" stroke-width="1.1"/><path d="M6.5 8.5 H9.5" stroke="#e8e8e8" stroke-width="1.5"/></svg><svg style="left:1362px;top:134px;" width="14" height="12" viewBox="0 0 14 12"><path d="M13 6 H1.5 M6.5 1 L1.5 6 L6.5 11" fill="none" stroke="#f0f0f0" stroke-width="1.8"/></svg><svg style="left:1392px;top:134px;" width="14" height="12" viewBox="0 0 14 12"><path d="M1 6 H12.5 M7.5 1 L12.5 6 L7.5 11" fill="none" stroke="#c8c8c8" stroke-width="1.6"/></svg><svg style="left:1422px;top:133px;" width="13" height="13" viewBox="0 0 13 13"><path d="M11.5 4.5 A5.5 5.5 0 1 0 12 8" fill="none" stroke="#e8e8e8" stroke-width="1.4"/><path d="M9 4.5 H12.5 V1" fill="#e8e8e8" stroke="#e8e8e8" stroke-width="1"/></svg><svg style="left:1453px;top:133px;" width="10" height="13" viewBox="0 0 10 13"><path d="M1 6.5 H9 V12.3 H1 Z M2.7 6.5 V3.5 Q2.7 0.7 5 0.7 Q7.3 0.7 7.5 3" fill="none" stroke="#e8e8e8" stroke-width="1.4"/></svg><svg style="left:1482px;top:134px;" width="12" height="12" viewBox="0 0 12 12"><path d="M0.5 0.5 H4.5 V4.5 H0.5 Z M7.5 0.5 H11.5 V4.5 H7.5 Z M0.5 7.5 H4.5 V11.5 H0.5 Z" fill="none" stroke="#e8e8e8" stroke-width="1.1"/><path d="M7 7.5 H8 M7 9.5 V10 M7 11.5 H8 M9.5 7.5 H11.5 V11.5 H10" fill="none" stroke="#e8e8e8" stroke-width="1.1"/></svg><div class="ab" style="left:1134px;top:159px;width:384px;height:1px;background:#1b1c18;"></div><div class="ab" style="left:1134px;top:160px;width:384px;height:5px;background:#22231f;"></div><div class="ab" style="left:1139px;top:165px;width:375px;height:812px;background:#f6f7f9;"></div><div class="ab" style="left:1139px;top:165px;width:375px;height:217px;background:#0462ea;"></div><div class="t" style="left:1158px;top:205px;font-size:20px;color:#ffffff;font-weight:bold">模擬帳戶</div><div class="t" style="left:1159px;top:228px;font-size:12px;color:#e6ecf8;">1087932</div><div class="t" style="left:1158px;top:289px;font-size:25px;color:#ffffff;">$999900.00</div><div class="t" style="left:1159px;top:325.5px;font-size:12px;color:#e6ecf8;">餘額</div><svg style="left:1464px;top:293px;" width="26" height="18" viewBox="0 0 26 18"><path d="M1 9 Q13 -4 25 9 Q13 22 1 9 Z" fill="#ffffff"/><circle cx="13" cy="9" r="4.5" fill="#0462ea"/><circle cx="13" cy="9" r="2.5" fill="#ffffff"/></svg><div class="ab" style="left:1511px;top:287px;width:2px;height:39px;background:#ffffff;"></div><div class="ab" style="left:1158px;top:397px;width:161px;height:57px;background:#0466fe;border-radius:10px"></div><div class="ab" style="left:1334px;top:397px;width:161px;height:57px;background:#f03b4a;border-radius:10px"></div><svg style="left:1165px;top:398px;" width="50" height="50" viewBox="0 0 50 50"><path d="M17.8 12.5 A16 16 0 1 0 30.8 12.5" fill="none" stroke="#fff" stroke-width="2"/><path d="M19.6 18 Q18.6 15 18.8 12 A5.5 5.5 0 0 1 29.8 12 Q30 15 29 18" fill="none" stroke="#fff" stroke-width="2"/><path d="M14.6 18.1 H33.8" stroke="#fff" stroke-width="2"/></svg><svg style="left:1345px;top:400px;" width="50" height="50" viewBox="0 0 50 50"><path d="M27 8 A17 17 0 1 0 38 17" fill="none" stroke="#fff" stroke-width="2"/><path d="M29 13 H35" stroke="#fff" stroke-width="2.2"/><path d="M34 8.5 L39 13 L34 17.5 Z" fill="#fff"/><path d="M25.5 19.5 Q24.5 17.5 21.5 17.5 Q18 17.5 18 20.5 Q18 23 21.5 24 Q25.5 25 25.5 28 Q25.5 31 21.5 31 Q18.5 31 17.5 29 M21.5 15 V17.5 M21.5 31 V34" fill="none" stroke="#fff" stroke-width="2"/></svg><div class="t" style="left:1219px;top:403px;font-size:15px;color:#ffffff;font-weight:bold">入金</div><div class="t" style="left:1219px;top:432px;font-size:12px;color:#d6e4ff;">帳單詳情</div><div class="t" style="left:1395px;top:403px;font-size:15px;color:#ffffff;font-weight:bold">出金</div><div class="t" style="left:1395px;top:432px;font-size:12px;color:#ffd0d4;">帳單詳情</div><div class="ab" style="left:1158px;top:469px;width:337px;height:50px;background:#ffffff;border-radius:10px"></div><div class="ab" style="left:1158px;top:469px;width:337px;height:1px;background:#eeeff2;"></div><div class="ab" style="left:1175px;top:477px;width:35px;height:35px;background:#dce8fc;border-radius:10px"></div><div class="t" style="left:1232px;top:487px;font-size:14px;color:#333333;">錢包</div><svg style="left:1473px;top:488px;" width="7" height="12" viewBox="0 0 7 12"><path d="M0.7 0.7 L6 6 L0.7 11.3" fill="none" stroke="#a0a0a0" stroke-width="1.3"/></svg><div class="ab" style="left:1158px;top:527px;width:337px;height:50px;background:#ffffff;border-radius:10px"></div><div class="ab" style="left:1158px;top:527px;width:337px;height:1px;background:#eeeff2;"></div><div class="ab" style="left:1175px;top:535px;width:35px;height:35px;background:#dce8fc;border-radius:10px"></div><div class="t" style="left:1232px;top:545px;font-size:14px;color:#333333;">實名認證</div><svg style="left:1473px;top:546px;" width="7" height="12" viewBox="0 0 7 12"><path d="M0.7 0.7 L6 6 L0.7 11.3" fill="none" stroke="#a0a0a0" stroke-width="1.3"/></svg><div class="ab" style="left:1158px;top:585px;width:337px;height:50px;background:#ffffff;border-radius:10px"></div><div class="ab" style="left:1158px;top:585px;width:337px;height:1px;background:#eeeff2;"></div><div class="ab" style="left:1175px;top:593px;width:35px;height:35px;background:#dce8fc;border-radius:10px"></div><div class="t" style="left:1232px;top:603px;font-size:14px;color:#333333;">邀請好友</div><svg style="left:1473px;top:604px;" width="7" height="12" viewBox="0 0 7 12"><path d="M0.7 0.7 L6 6 L0.7 11.3" fill="none" stroke="#a0a0a0" stroke-width="1.3"/></svg><div class="ab" style="left:1158px;top:643px;width:337px;height:50px;background:#ffffff;border-radius:10px"></div><div class="ab" style="left:1158px;top:643px;width:337px;height:1px;background:#eeeff2;"></div><div class="ab" style="left:1175px;top:651px;width:35px;height:35px;background:#dce8fc;border-radius:10px"></div><div class="t" style="left:1232px;top:661px;font-size:14px;color:#333333;">修改密碼</div><svg style="left:1473px;top:662px;" width="7" height="12" viewBox="0 0 7 12"><path d="M0.7 0.7 L6 6 L0.7 11.3" fill="none" stroke="#a0a0a0" stroke-width="1.3"/></svg><div class="ab" style="left:1158px;top:701px;width:337px;height:50px;background:#ffffff;border-radius:10px"></div><div class="ab" style="left:1158px;top:701px;width:337px;height:1px;background:#eeeff2;"></div><div class="ab" style="left:1175px;top:709px;width:35px;height:35px;background:#dce8fc;border-radius:10px"></div><div class="t" style="left:1232px;top:719px;font-size:14px;color:#333333;">投訴郵箱</div><svg style="left:1473px;top:720px;" width="7" height="12" viewBox="0 0 7 12"><path d="M0.7 0.7 L6 6 L0.7 11.3" fill="none" stroke="#a0a0a0" stroke-width="1.3"/></svg><div class="ab" style="left:1158px;top:759px;width:337px;height:50px;background:#ffffff;border-radius:10px"></div><div class="ab" style="left:1158px;top:759px;width:337px;height:1px;background:#eeeff2;"></div><div class="ab" style="left:1175px;top:767px;width:35px;height:35px;background:#dce8fc;border-radius:10px"></div><div class="t" style="left:1232px;top:777px;font-size:14px;color:#333333;">聯系客服</div><svg style="left:1473px;top:778px;" width="7" height="12" viewBox="0 0 7 12"><path d="M0.7 0.7 L6 6 L0.7 11.3" fill="none" stroke="#a0a0a0" stroke-width="1.3"/></svg><div class="ab" style="left:1158px;top:817px;width:337px;height:50px;background:#ffffff;border-radius:10px"></div><div class="ab" style="left:1158px;top:817px;width:337px;height:1px;background:#eeeff2;"></div><div class="ab" style="left:1175px;top:825px;width:35px;height:35px;background:#dce8fc;border-radius:10px"></div><div class="t" style="left:1232px;top:835px;font-size:14px;color:#333333;">公告</div><svg style="left:1473px;top:836px;" width="7" height="12" viewBox="0 0 7 12"><path d="M0.7 0.7 L6 6 L0.7 11.3" fill="none" stroke="#a0a0a0" stroke-width="1.3"/></svg><svg style="left:1183px;top:487px;" width="21" height="16" viewBox="0 0 21 16"><rect x="0" y="0" width="21" height="16" rx="1.5" fill="#0466fe"/><rect x="0" y="3" width="21" height="1.6" fill="#dce8fc"/><rect x="12" y="10.5" width="5" height="1.6" fill="#dce8fc"/></svg><svg style="left:1183px;top:541px;" width="22" height="22" viewBox="0 0 22 22"><circle cx="8.5" cy="5.5" r="5.5" fill="#0466fe"/><path d="M0 21 Q0 11 8.5 11 Q13 11 15 13 L15 21 Z" fill="#0466fe"/><circle cx="15.5" cy="15.5" r="6" fill="#0466fe" stroke="#dce8fc" stroke-width="1.5"/><path d="M12.8 15.5 L15 17.5 L18.5 13.8" fill="none" stroke="#fff" stroke-width="1.3"/></svg><svg style="left:1183px;top:599px;" width="22" height="22" viewBox="0 0 22 22"><circle cx="8.5" cy="5.5" r="5.5" fill="#0466fe"/><path d="M0 21 Q0 11 8.5 11 Q13 11 15 13 L15 21 Z" fill="#0466fe"/><circle cx="15.5" cy="15.5" r="6" fill="#0466fe" stroke="#dce8fc" stroke-width="1.5"/><path d="M15.5 12.5 V18.5 M12.5 15.5 H18.5" stroke="#fff" stroke-width="1.4"/></svg><svg style="left:1185px;top:655px;" width="17" height="22" viewBox="0 0 17 22"><path d="M4 10 V6 Q4 1.5 8.5 1.5 Q13 1.5 13 5" fill="none" stroke="#0466fe" stroke-width="2.2"/><rect x="0" y="10" width="17" height="12" rx="1.5" fill="#0466fe"/><rect x="7.6" y="14" width="1.8" height="4" fill="#fff"/></svg><svg style="left:1184px;top:716px;" width="19" height="19" viewBox="0 0 19 19"><path d="M0 0 H19 V15 H7 L3 19 V15 H0 Z" fill="#0466fe"/><path d="M5.5 7 Q9.5 11 13.5 7" fill="none" stroke="#fff" stroke-width="1.4"/></svg><svg style="left:1183px;top:774px;" width="21" height="19" viewBox="0 0 21 19"><path d="M10.5 0 Q21 0 21 8.5 Q21 17 10.5 17 Q8 17 6 16.3 L2 19 L3 14.5 Q0 12 0 8.5 Q0 0 10.5 0 Z" fill="#0466fe"/><circle cx="6" cy="8.5" r="1.4" fill="#fff"/><circle cx="10.5" cy="8.5" r="1.4" fill="#fff"/><circle cx="15" cy="8.5" r="1.4" fill="#fff"/></svg><svg style="left:1183px;top:831px;" width="22" height="20" viewBox="0 0 22 20"><path d="M0 6 H5 L11 0.5 V19.5 L5 14 H0 Z" fill="#0466fe"/><path d="M14 6 Q16.5 10 14 14" fill="none" stroke="#0466fe" stroke-width="1.6"/><path d="M17 3 Q21.5 10 17 17" fill="none" stroke="#0466fe" stroke-width="1.6"/></svg><div class="ab" style="left:1158px;top:890px;width:337px;height:30px;background:#ffffff;border-radius:10px"></div><div class="ab" style="left:1158px;top:890px;width:337px;height:1px;background:#e8e9ee;"></div><div class="ab" style="left:1175px;top:899px;width:35px;height:10px;background:#dce8fc;border-radius:10px 10px 0 0"></div><div class="ab" style="left:1139px;top:900px;width:375px;height:77px;background:#ffffff;border-top:1px solid #d8dae6"></div><div class="ab" style="left:1161px;top:915px;width:31px;height:31px;background:#d0d0d0;border-radius:9px"></div><div class="t" style="left:1165px;top:952px;font-size:12px;color:#555555;">首頁</div><div class="ab" style="left:1236px;top:915px;width:31px;height:31px;background:#d0d0d0;border-radius:9px"></div><div class="t" style="left:1240px;top:952px;font-size:12px;color:#555555;">訂單</div><div class="ab" style="left:1386px;top:915px;width:31px;height:31px;background:#d0d0d0;border-radius:9px"></div><div class="t" style="left:1390px;top:952px;font-size:12px;color:#555555;">理財</div><div class="ab" style="left:1460px;top:915px;width:31px;height:31px;background:#0466fe;border-radius:9px"></div><div class="t" style="left:1464px;top:952px;font-size:12px;color:#3b3bd6;">我的</div><svg style="left:1168px;top:922px;" width="18" height="18" viewBox="0 0 18 18"><path d="M1 16.5 H17 M3.5 15 V9 M9 15 V2.5 M15 15 V8.5" stroke="#fff" stroke-width="1.4"/></svg><svg style="left:1245px;top:924px;" width="14" height="14" viewBox="0 0 14 14"><rect x="0" y="0" width="6" height="6" fill="#fff"/><rect x="8" y="0" width="6" height="6" fill="#fff"/><rect x="0" y="8" width="6" height="6" fill="#fff"/><rect x="8" y="8" width="6" height="6" fill="#fff"/></svg><svg style="left:1395px;top:922px;" width="16" height="20" viewBox="0 0 16 20"><path d="M5 3 V10.5 L11 16.5" fill="none" stroke="#fff" stroke-width="3" stroke-linecap="round" stroke-linejoin="round"/></svg><svg style="left:1466px;top:920px;" width="21" height="21" viewBox="0 0 21 21"><circle cx="10.5" cy="7.5" r="4.6" fill="none" stroke="#fff" stroke-width="2.2"/><path d="M3.5 18.5 Q3.5 13 10.5 13 Q17.5 13 17.5 18.5" fill="none" stroke="#fff" stroke-width="2.2" stroke-linecap="round"/></svg><div class="ab" style="left:1300px;top:887px;width:52px;height:52px;background:#0466fe;border-radius:50%"></div><svg style="left:1313px;top:903px;" width="26" height="20" viewBox="0 0 26 20"><path d="M25 6 H4 L10 1" fill="none" stroke="#fff" stroke-width="2.8"/><path d="M1 14 H22 L16 19" fill="none" stroke="#fff" stroke-width="2.8"/></svg><div class="ab" style="left:1139px;top:977px;width:375px;height:5px;background:#22231f;"></div></body></html>
